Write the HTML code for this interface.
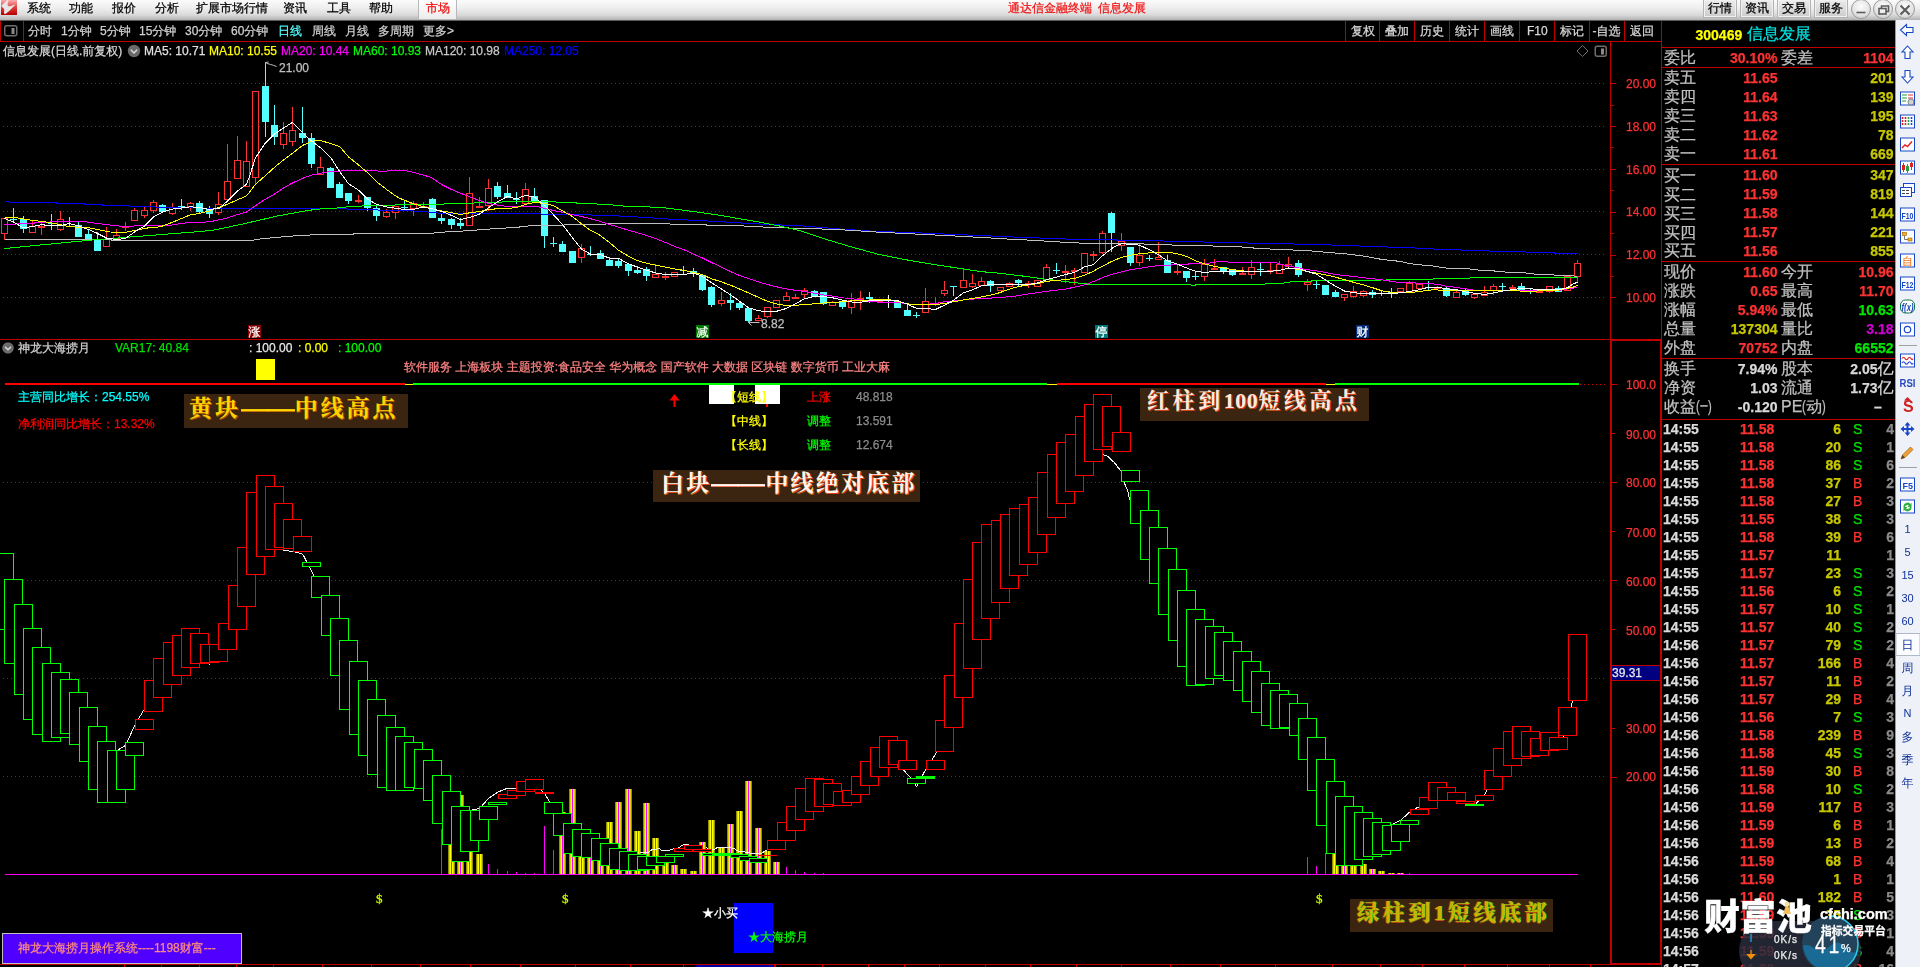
<!DOCTYPE html><html><head><meta charset="utf-8"><title>chart</title><style>
html,body{margin:0;padding:0;width:1920px;height:967px;overflow:hidden}
html{background:#000}
body{position:relative;will-change:opacity;background:transparent;font-family:"Liberation Sans","WenQuanYi Zen Hei",sans-serif;font-size:12px;color:#c8c8c8}
.t{position:absolute;white-space:nowrap;line-height:1;font-size:12px;-webkit-text-stroke:0.25px currentColor}
.b{position:absolute;box-sizing:border-box}
.n{font-weight:bold;font-size:14px;font-family:"Liberation Sans",sans-serif}
.l{font-size:16px;color:#c0c0c0}
.r{text-align:right}
.pp{display:inline-block;width:4px;transform:scaleX(0.7);transform-origin:left center}
svg{position:absolute;left:0;top:0}
.lab{position:absolute;background:#3c2510;font-family:"Liberation Serif","Noto Serif CJK SC",serif;font-weight:700;white-space:nowrap;line-height:1;box-sizing:border-box}
</style></head><body>
<div class="b" style="left:0px;top:0px;width:1920px;height:21px;background:linear-gradient(#fbfbfb 0%,#eeeeee 40%,#dadada 75%,#b2b2b2 100%);border-bottom:1px solid #5a5a5a"></div>
<svg width="18" height="16" style="left:0;top:0" viewBox="0 0 18 16" shape-rendering="geometricPrecision"><defs><linearGradient id="lg" x1="0" y1="0" x2="0" y2="1"><stop offset="0" stop-color="#f8b0b0"/><stop offset="0.5" stop-color="#e23a3a"/><stop offset="1" stop-color="#b40000"/></linearGradient></defs><rect x="1" y="0" width="16" height="15" fill="url(#lg)"/><path d="M1.5 5.500L7.500 0L8.600 0L7.400 4.800L9 6.600L15.600 4.400L9.500 10.800L5.500 14L4 13.600L4.200 9L1.500 6.500Z" fill="#e6e6e6"/></svg>
<span class="t " style="left:27px;top:2px;color:#000000;">系统</span>
<span class="t " style="left:69px;top:2px;color:#000000;">功能</span>
<span class="t " style="left:112px;top:2px;color:#000000;">报价</span>
<span class="t " style="left:155px;top:2px;color:#000000;">分析</span>
<span class="t " style="left:196px;top:2px;color:#000000;">扩展市场行情</span>
<span class="t " style="left:283px;top:2px;color:#000000;">资讯</span>
<span class="t " style="left:327px;top:2px;color:#000000;">工具</span>
<span class="t " style="left:369px;top:2px;color:#000000;">帮助</span>
<div class="b" style="left:418px;top:0px;width:39px;height:20px;background:linear-gradient(#ffffff,#ececec);border:1px solid #b8b8b8;border-top:none"></div>
<span class="t " style="left:426px;top:2px;color:#ee1010;">市场</span>
<span class="t " style="left:1008px;top:2px;color:#f01818;">通达信金融终端<span style="display:inline-block;width:6px"></span>信息发展</span>
<div class="b" style="left:1702.5px;top:-1px;width:34.5px;height:19px;background:linear-gradient(#ececec,#cccccc);border:1px solid #b4b4b4;box-shadow:inset 0 0 0 1px #f0f0f0"></div>
<span class="t " style="left:1708px;top:2px;color:#000000;">行情</span>
<div class="b" style="left:1739.5px;top:-1px;width:34.5px;height:19px;background:linear-gradient(#ececec,#cccccc);border:1px solid #b4b4b4;box-shadow:inset 0 0 0 1px #f0f0f0"></div>
<span class="t " style="left:1745px;top:2px;color:#000000;">资讯</span>
<div class="b" style="left:1776.5px;top:-1px;width:34.5px;height:19px;background:linear-gradient(#ececec,#cccccc);border:1px solid #b4b4b4;box-shadow:inset 0 0 0 1px #f0f0f0"></div>
<span class="t " style="left:1782px;top:2px;color:#000000;">交易</span>
<div class="b" style="left:1813.5px;top:-1px;width:34.5px;height:19px;background:linear-gradient(#ececec,#cccccc);border:1px solid #b4b4b4;box-shadow:inset 0 0 0 1px #f0f0f0"></div>
<span class="t " style="left:1819px;top:2px;color:#000000;">服务</span>
<div class="b" style="left:1851px;top:-1.5px;width:20px;height:20px;background:radial-gradient(circle at 50% 35%,#fdfdfd 0%,#e2e2e2 60%,#c0c0c0 100%);border:1px solid #9a9a9a;border-radius:50%"></div>
<div class="b" style="left:1873px;top:-1.5px;width:20px;height:20px;background:radial-gradient(circle at 50% 35%,#fdfdfd 0%,#e2e2e2 60%,#c0c0c0 100%);border:1px solid #9a9a9a;border-radius:50%"></div>
<div class="b" style="left:1895px;top:-1.5px;width:20px;height:20px;background:radial-gradient(circle at 50% 35%,#fdfdfd 0%,#e2e2e2 60%,#c0c0c0 100%);border:1px solid #9a9a9a;border-radius:50%"></div>
<svg width="70" height="21" style="left:1850px;top:0" viewBox="0 0 70 21" fill="none" stroke="#5a5a5a" stroke-width="1.6"><path d="M6.5 12.5h9"/><rect x="29" y="8.5" width="7" height="5.5"/><path d="M31.5 8.5v-2.5h7v5.5h-2.5"/><path d="M50.5 5.5l9 9M59.5 5.5l-9 9" stroke-width="2"/></svg>
<div class="b" style="left:0px;top:41px;width:1661px;height:1px;background:#c00000;"></div>
<div class="b" style="left:0px;top:21px;width:1px;height:21px;background:#c00000;"></div>
<div class="b" style="left:23px;top:21px;width:1px;height:20px;background:#c00000;"></div>
<svg width="14" height="12" style="left:4px;top:25px" viewBox="0 0 14 12"><rect x="0.75" y="0.75" width="12" height="10" rx="2" fill="none" stroke="#6e6e6e" stroke-width="1.5"/><rect x="7.5" y="3" width="3" height="6" fill="#8a8a8a"/></svg>
<span class="t " style="left:28px;top:25px;color:#d0d0d0;">分时</span>
<span class="t " style="left:61px;top:25px;color:#d0d0d0;">1分钟</span>
<span class="t " style="left:100px;top:25px;color:#d0d0d0;">5分钟</span>
<span class="t " style="left:139px;top:25px;color:#d0d0d0;">15分钟</span>
<span class="t " style="left:185px;top:25px;color:#d0d0d0;">30分钟</span>
<span class="t " style="left:231px;top:25px;color:#d0d0d0;">60分钟</span>
<span class="t " style="left:278px;top:25px;color:#54ffff;">日线</span>
<span class="t " style="left:312px;top:25px;color:#d0d0d0;">周线</span>
<span class="t " style="left:345px;top:25px;color:#d0d0d0;">月线</span>
<span class="t " style="left:378px;top:25px;color:#d0d0d0;">多周期</span>
<span class="t " style="left:423px;top:25px;color:#d0d0d0;">更多&gt;</span>
<div class="b" style="left:1345px;top:21px;width:1px;height:20px;background:#c00000;"></div>
<div class="b" style="left:1379px;top:21px;width:1px;height:20px;background:#c00000;"></div>
<div class="b" style="left:1414px;top:21px;width:1px;height:20px;background:#c00000;"></div>
<div class="b" style="left:1449px;top:21px;width:1px;height:20px;background:#c00000;"></div>
<div class="b" style="left:1484px;top:21px;width:1px;height:20px;background:#c00000;"></div>
<div class="b" style="left:1519px;top:21px;width:1px;height:20px;background:#c00000;"></div>
<div class="b" style="left:1554px;top:21px;width:1px;height:20px;background:#c00000;"></div>
<div class="b" style="left:1589px;top:21px;width:1px;height:20px;background:#c00000;"></div>
<div class="b" style="left:1624px;top:21px;width:1px;height:20px;background:#c00000;"></div>
<span class="t " style="left:1351px;top:25px;color:#d8d8d8;">复权</span>
<span class="t " style="left:1385px;top:25px;color:#d8d8d8;">叠加</span>
<span class="t " style="left:1420px;top:25px;color:#d8d8d8;">历史</span>
<span class="t " style="left:1455px;top:25px;color:#d8d8d8;">统计</span>
<span class="t " style="left:1490px;top:25px;color:#d8d8d8;">画线</span>
<span class="t " style="left:1527px;top:25px;color:#d8d8d8;">F10</span>
<span class="t " style="left:1560px;top:25px;color:#d8d8d8;">标记</span>
<span class="t " style="left:1592.5px;top:25px;color:#d8d8d8;">-自选</span>
<span class="t " style="left:1630px;top:25px;color:#d8d8d8;">返回</span>
<div class="b" style="left:1610px;top:42px;width:1px;height:298px;background:#c00000;"></div>
<div class="b" style="left:0px;top:339px;width:1661px;height:1px;background:#c00000;"></div>
<div class="b" style="left:1610px;top:340px;width:2px;height:624px;background:#c00000;"></div>
<div class="b" style="left:0px;top:964px;width:1612px;height:1px;background:#c00000;"></div>
<div class="b" style="left:1610px;top:963px;width:52px;height:2px;background:#c00000;"></div>
<div class="b" style="left:1660px;top:340px;width:1px;height:625px;background:#c00000;"></div>
<div class="b" style="left:1610px;top:340px;width:51px;height:1px;background:#c00000;"></div>
<div class="b" style="left:1661px;top:21px;width:1px;height:946px;background:#c00000;"></div>
<span class="t " style="left:3px;top:45px;color:#d8d8d8;">信息发展(日线.前复权)</span>
<svg width="14" height="14" style="left:127px;top:44px" viewBox="0 0 14 14"><circle cx="7" cy="7" r="6.2" fill="#6a6a6a"/><path d="M3.8 5.8L7 9l3.2-3.2" fill="none" stroke="#dcdcdc" stroke-width="1.5"/></svg>
<span class="t " style="left:144px;top:45px;color:#e0e0e0;">MA5: 10.71</span>
<span class="t " style="left:209px;top:45px;color:#ffff00;">MA10: 10.55</span>
<span class="t " style="left:281px;top:45px;color:#ff00ff;">MA20: 10.44</span>
<span class="t " style="left:353px;top:45px;color:#00ff00;">MA60: 10.93</span>
<span class="t " style="left:425px;top:45px;color:#c8c8c8;">MA120: 10.98</span>
<span class="t " style="left:504px;top:45px;color:#0000ff;">MA250: 12.05</span>
<svg width="32" height="14" style="left:1576px;top:44px" viewBox="0 0 32 14"><path d="M6.5 1.5l5.5 5.5-5.5 5.5L1 7z" fill="none" stroke="#6e6e6e" stroke-width="1"/><rect x="19.75" y="1.75" width="11" height="10" rx="2" fill="none" stroke="#6e6e6e" stroke-width="1.5" transform="translate(-0.5,0.5)"/><rect x="25" y="4.5" width="3" height="6" fill="#8a8a8a"/></svg>
<svg width="1661" height="967" viewBox="0 0 1661 967" shape-rendering="crispEdges">
<line x1="3" y1="83.5" x2="1604" y2="83.5" stroke="#d00000" stroke-width="1" stroke-dasharray="1 3"/>
<line x1="3" y1="126.5" x2="1604" y2="126.5" stroke="#d00000" stroke-width="1" stroke-dasharray="1 3"/>
<line x1="3" y1="169.5" x2="1604" y2="169.5" stroke="#d00000" stroke-width="1" stroke-dasharray="1 3"/>
<line x1="3" y1="211.5" x2="1604" y2="211.5" stroke="#d00000" stroke-width="1" stroke-dasharray="1 3"/>
<line x1="3" y1="254.5" x2="1604" y2="254.5" stroke="#d00000" stroke-width="1" stroke-dasharray="1 3"/>
<line x1="3" y1="297.5" x2="1604" y2="297.5" stroke="#d00000" stroke-width="1" stroke-dasharray="1 3"/>
<line x1="1611" y1="297.5" x2="1616" y2="297.5" stroke="#c00000" stroke-width="1"/>
<line x1="1611" y1="276.5" x2="1614" y2="276.5" stroke="#c00000" stroke-width="1"/>
<line x1="1611" y1="255.5" x2="1616" y2="255.5" stroke="#c00000" stroke-width="1"/>
<line x1="1611" y1="233.5" x2="1614" y2="233.5" stroke="#c00000" stroke-width="1"/>
<line x1="1611" y1="212.5" x2="1616" y2="212.5" stroke="#c00000" stroke-width="1"/>
<line x1="1611" y1="190.5" x2="1614" y2="190.5" stroke="#c00000" stroke-width="1"/>
<line x1="1611" y1="169.5" x2="1616" y2="169.5" stroke="#c00000" stroke-width="1"/>
<line x1="1611" y1="147.5" x2="1614" y2="147.5" stroke="#c00000" stroke-width="1"/>
<line x1="1611" y1="126.5" x2="1616" y2="126.5" stroke="#c00000" stroke-width="1"/>
<line x1="1611" y1="105.5" x2="1614" y2="105.5" stroke="#c00000" stroke-width="1"/>
<line x1="1611" y1="83.5" x2="1616" y2="83.5" stroke="#c00000" stroke-width="1"/>
<line x1="3" y1="482.5" x2="1606" y2="482.5" stroke="#d00000" stroke-width="1" stroke-dasharray="1 3"/>
<line x1="3" y1="580.5" x2="1606" y2="580.5" stroke="#d00000" stroke-width="1" stroke-dasharray="1 3"/>
<line x1="3" y1="678.5" x2="1606" y2="678.5" stroke="#d00000" stroke-width="1" stroke-dasharray="1 3"/>
<line x1="3" y1="776.5" x2="1606" y2="776.5" stroke="#d00000" stroke-width="1" stroke-dasharray="1 3"/>
<line x1="1580" y1="384.5" x2="1606" y2="384.5" stroke="#d00000" stroke-width="1" stroke-dasharray="1 3"/>
<line x1="1612" y1="777.5" x2="1617" y2="777.5" stroke="#c00000" stroke-width="1"/>
<line x1="1612" y1="728.5" x2="1615" y2="728.5" stroke="#c00000" stroke-width="1"/>
<line x1="1612" y1="678.5" x2="1617" y2="678.5" stroke="#c00000" stroke-width="1"/>
<line x1="1612" y1="629.5" x2="1615" y2="629.5" stroke="#c00000" stroke-width="1"/>
<line x1="1612" y1="580.5" x2="1617" y2="580.5" stroke="#c00000" stroke-width="1"/>
<line x1="1612" y1="531.5" x2="1615" y2="531.5" stroke="#c00000" stroke-width="1"/>
<line x1="1612" y1="482.5" x2="1617" y2="482.5" stroke="#c00000" stroke-width="1"/>
<line x1="1612" y1="433.5" x2="1615" y2="433.5" stroke="#c00000" stroke-width="1"/>
<line x1="1612" y1="384.5" x2="1617" y2="384.5" stroke="#c00000" stroke-width="1"/>
<line x1="124.5" y1="964" x2="124.5" y2="967" stroke="#c00000" stroke-width="1"/>
<line x1="161.5" y1="964" x2="161.5" y2="967" stroke="#c00000" stroke-width="1"/>
<line x1="199.5" y1="964" x2="199.5" y2="967" stroke="#c00000" stroke-width="1"/>
<line x1="236.5" y1="964" x2="236.5" y2="967" stroke="#c00000" stroke-width="1"/>
<line x1="273.5" y1="964" x2="273.5" y2="967" stroke="#c00000" stroke-width="1"/>
<line x1="322.5" y1="964" x2="322.5" y2="967" stroke="#c00000" stroke-width="1"/>
<line x1="371.5" y1="964" x2="371.5" y2="967" stroke="#c00000" stroke-width="1"/>
<line x1="420.5" y1="964" x2="420.5" y2="967" stroke="#c00000" stroke-width="1"/>
<line x1="470.5" y1="964" x2="470.5" y2="967" stroke="#c00000" stroke-width="1"/>
<line x1="520.5" y1="964" x2="520.5" y2="967" stroke="#c00000" stroke-width="1"/>
<line x1="575.5" y1="964" x2="575.5" y2="967" stroke="#c00000" stroke-width="1"/>
<line x1="630.5" y1="964" x2="630.5" y2="967" stroke="#c00000" stroke-width="1"/>
<line x1="683.5" y1="964" x2="683.5" y2="967" stroke="#c00000" stroke-width="1"/>
<line x1="774.5" y1="964" x2="774.5" y2="967" stroke="#c00000" stroke-width="1"/>
<line x1="775.5" y1="964" x2="775.5" y2="967" stroke="#c00000" stroke-width="1"/>
<line x1="822.5" y1="964" x2="822.5" y2="967" stroke="#c00000" stroke-width="1"/>
<line x1="868.5" y1="964" x2="868.5" y2="967" stroke="#c00000" stroke-width="1"/>
<line x1="904.5" y1="964" x2="904.5" y2="967" stroke="#c00000" stroke-width="1"/>
<line x1="939.5" y1="964" x2="939.5" y2="967" stroke="#c00000" stroke-width="1"/>
<line x1="985.5" y1="964" x2="985.5" y2="967" stroke="#c00000" stroke-width="1"/>
<line x1="1030.5" y1="964" x2="1030.5" y2="967" stroke="#c00000" stroke-width="1"/>
<line x1="1076.5" y1="964" x2="1076.5" y2="967" stroke="#c00000" stroke-width="1"/>
<line x1="1121.5" y1="964" x2="1121.5" y2="967" stroke="#c00000" stroke-width="1"/>
<line x1="1170.5" y1="964" x2="1170.5" y2="967" stroke="#c00000" stroke-width="1"/>
<line x1="1220.5" y1="964" x2="1220.5" y2="967" stroke="#c00000" stroke-width="1"/>
<line x1="1275.5" y1="964" x2="1275.5" y2="967" stroke="#c00000" stroke-width="1"/>
<line x1="1332.5" y1="964" x2="1332.5" y2="967" stroke="#c00000" stroke-width="1"/>
<line x1="1380.5" y1="964" x2="1380.5" y2="967" stroke="#c00000" stroke-width="1"/>
<line x1="1422.5" y1="964" x2="1422.5" y2="967" stroke="#c00000" stroke-width="1"/>
<line x1="1464.5" y1="964" x2="1464.5" y2="967" stroke="#c00000" stroke-width="1"/>
<line x1="1507.5" y1="964" x2="1507.5" y2="967" stroke="#c00000" stroke-width="1"/>
<line x1="1549.5" y1="964" x2="1549.5" y2="967" stroke="#c00000" stroke-width="1"/>
<line x1="1590.5" y1="964" x2="1590.5" y2="967" stroke="#c00000" stroke-width="1"/>
<rect x="696" y="965" width="77" height="2" fill="#0000a0"/>
<rect x="4" y="218" width="1" height="22" fill="#ff3232"/>
<rect x="1.5" y="218.5" width="6" height="15" fill="#000" stroke="#ff3232" stroke-width="1"/>
<rect x="13" y="208" width="1" height="13" fill="#54ffff"/>
<rect x="10" y="219" width="7" height="1" fill="#54ffff"/>
<rect x="23" y="216" width="1" height="17" fill="#54ffff"/>
<rect x="20" y="219" width="7" height="10" fill="#54ffff"/>
<rect x="32" y="221" width="1" height="12" fill="#ff3232"/>
<rect x="29.5" y="226.5" width="6" height="6" fill="#000" stroke="#ff3232" stroke-width="1"/>
<rect x="41" y="221" width="1" height="14" fill="#ff3232"/>
<rect x="38" y="226" width="7" height="2" fill="#ff3232"/>
<rect x="51" y="214" width="1" height="16" fill="#54ffff"/>
<rect x="48" y="223" width="7" height="1" fill="#54ffff"/>
<rect x="60" y="211" width="1" height="20" fill="#ff3232"/>
<rect x="57.5" y="219.5" width="6" height="10" fill="#000" stroke="#ff3232" stroke-width="1"/>
<rect x="69" y="217" width="1" height="9" fill="#54ffff"/>
<rect x="66" y="221" width="7" height="1" fill="#54ffff"/>
<rect x="78" y="221" width="1" height="16" fill="#54ffff"/>
<rect x="75" y="225" width="7" height="12" fill="#54ffff"/>
<rect x="88" y="229" width="1" height="11" fill="#54ffff"/>
<rect x="85" y="234" width="7" height="6" fill="#54ffff"/>
<rect x="97" y="232" width="1" height="19" fill="#54ffff"/>
<rect x="94" y="239" width="7" height="12" fill="#54ffff"/>
<rect x="106" y="227" width="1" height="20" fill="#ff3232"/>
<rect x="103.5" y="239.5" width="6" height="7" fill="#000" stroke="#ff3232" stroke-width="1"/>
<rect x="116" y="229" width="1" height="11" fill="#ff3232"/>
<rect x="113.5" y="235.5" width="6" height="3" fill="#000" stroke="#ff3232" stroke-width="1"/>
<rect x="125" y="222" width="1" height="9" fill="#ff3232"/>
<rect x="122" y="226" width="7" height="2" fill="#ff3232"/>
<rect x="134" y="208" width="1" height="13" fill="#ff3232"/>
<rect x="131.5" y="210.5" width="6" height="10" fill="#000" stroke="#ff3232" stroke-width="1"/>
<rect x="144" y="207" width="1" height="11" fill="#ff3232"/>
<rect x="141.5" y="210.5" width="6" height="5" fill="#000" stroke="#ff3232" stroke-width="1"/>
<rect x="153" y="200" width="1" height="13" fill="#ff3232"/>
<rect x="150.5" y="202.5" width="6" height="8" fill="#000" stroke="#ff3232" stroke-width="1"/>
<rect x="162" y="204" width="1" height="8" fill="#54ffff"/>
<rect x="159" y="205" width="7" height="7" fill="#54ffff"/>
<rect x="172" y="203" width="1" height="12" fill="#ff3232"/>
<rect x="169.5" y="207.5" width="6" height="6" fill="#000" stroke="#ff3232" stroke-width="1"/>
<rect x="181" y="199" width="1" height="11" fill="#54ffff"/>
<rect x="178" y="206" width="7" height="1" fill="#54ffff"/>
<rect x="190" y="202" width="1" height="9" fill="#ff3232"/>
<rect x="187.5" y="203.5" width="6" height="3" fill="#000" stroke="#ff3232" stroke-width="1"/>
<rect x="199" y="201" width="1" height="12" fill="#54ffff"/>
<rect x="196" y="203" width="7" height="9" fill="#54ffff"/>
<rect x="209" y="206" width="1" height="12" fill="#54ffff"/>
<rect x="206" y="208" width="7" height="6" fill="#54ffff"/>
<rect x="218" y="192" width="1" height="23" fill="#ff3232"/>
<rect x="215.5" y="204.5" width="6" height="8" fill="#000" stroke="#ff3232" stroke-width="1"/>
<rect x="227" y="144" width="1" height="56" fill="#ff3232"/>
<rect x="224.5" y="181.5" width="6" height="18" fill="#000" stroke="#ff3232" stroke-width="1"/>
<rect x="237" y="136" width="1" height="43" fill="#ff3232"/>
<rect x="234.5" y="160.5" width="6" height="18" fill="#000" stroke="#ff3232" stroke-width="1"/>
<rect x="246" y="141" width="1" height="46" fill="#ff3232"/>
<rect x="243.5" y="161.5" width="6" height="25" fill="#000" stroke="#ff3232" stroke-width="1"/>
<rect x="255" y="91" width="1" height="93" fill="#ff3232"/>
<rect x="252.5" y="91.5" width="6" height="86" fill="#000" stroke="#ff3232" stroke-width="1"/>
<rect x="265" y="64" width="1" height="73" fill="#54ffff"/>
<rect x="262" y="86" width="7" height="36" fill="#54ffff"/>
<rect x="274" y="105" width="1" height="40" fill="#54ffff"/>
<rect x="271" y="125" width="7" height="12" fill="#54ffff"/>
<rect x="283" y="122" width="1" height="27" fill="#ff3232"/>
<rect x="280.5" y="133.5" width="6" height="11" fill="#000" stroke="#ff3232" stroke-width="1"/>
<rect x="292" y="107" width="1" height="39" fill="#ff3232"/>
<rect x="289.5" y="130.5" width="6" height="11" fill="#000" stroke="#ff3232" stroke-width="1"/>
<rect x="302" y="107" width="1" height="36" fill="#54ffff"/>
<rect x="299" y="133" width="7" height="5" fill="#54ffff"/>
<rect x="311" y="133" width="1" height="35" fill="#54ffff"/>
<rect x="308" y="138" width="7" height="26" fill="#54ffff"/>
<rect x="320" y="157" width="1" height="18" fill="#ff3232"/>
<rect x="317.5" y="167.5" width="6" height="7" fill="#000" stroke="#ff3232" stroke-width="1"/>
<rect x="330" y="167" width="1" height="21" fill="#54ffff"/>
<rect x="327" y="168" width="7" height="20" fill="#54ffff"/>
<rect x="339" y="182" width="1" height="16" fill="#54ffff"/>
<rect x="336" y="184" width="7" height="14" fill="#54ffff"/>
<rect x="348" y="193" width="1" height="11" fill="#54ffff"/>
<rect x="345" y="193" width="7" height="8" fill="#54ffff"/>
<rect x="358" y="195" width="1" height="8" fill="#ff3232"/>
<rect x="355" y="200" width="7" height="2" fill="#ff3232"/>
<rect x="367" y="197" width="1" height="14" fill="#54ffff"/>
<rect x="364" y="197" width="7" height="11" fill="#54ffff"/>
<rect x="376" y="206" width="1" height="15" fill="#54ffff"/>
<rect x="373" y="208" width="7" height="8" fill="#54ffff"/>
<rect x="386" y="209" width="1" height="9" fill="#ff3232"/>
<rect x="383.5" y="212.5" width="6" height="4" fill="#000" stroke="#ff3232" stroke-width="1"/>
<rect x="395" y="206" width="1" height="13" fill="#ff3232"/>
<rect x="392.5" y="206.5" width="6" height="6" fill="#000" stroke="#ff3232" stroke-width="1"/>
<rect x="404" y="201" width="1" height="9" fill="#54ffff"/>
<rect x="401" y="207" width="7" height="1" fill="#54ffff"/>
<rect x="413" y="201" width="1" height="15" fill="#ff3232"/>
<rect x="410.5" y="203.5" width="6" height="5" fill="#000" stroke="#ff3232" stroke-width="1"/>
<rect x="423" y="202" width="1" height="6" fill="#ff3232"/>
<rect x="420" y="206" width="7" height="2" fill="#ff3232"/>
<rect x="432" y="198" width="1" height="20" fill="#54ffff"/>
<rect x="429" y="199" width="7" height="19" fill="#54ffff"/>
<rect x="441" y="214" width="1" height="10" fill="#54ffff"/>
<rect x="438" y="218" width="7" height="3" fill="#54ffff"/>
<rect x="451" y="218" width="1" height="11" fill="#54ffff"/>
<rect x="448" y="219" width="7" height="6" fill="#54ffff"/>
<rect x="460" y="218" width="1" height="11" fill="#54ffff"/>
<rect x="457" y="223" width="7" height="3" fill="#54ffff"/>
<rect x="469" y="177" width="1" height="49" fill="#ff3232"/>
<rect x="466.5" y="193.5" width="6" height="32" fill="#000" stroke="#ff3232" stroke-width="1"/>
<rect x="479" y="197" width="1" height="11" fill="#ff3232"/>
<rect x="476" y="206" width="7" height="2" fill="#ff3232"/>
<rect x="488" y="179" width="1" height="32" fill="#ff3232"/>
<rect x="485.5" y="188.5" width="6" height="17" fill="#000" stroke="#ff3232" stroke-width="1"/>
<rect x="497" y="182" width="1" height="17" fill="#54ffff"/>
<rect x="494" y="186" width="7" height="11" fill="#54ffff"/>
<rect x="507" y="185" width="1" height="13" fill="#54ffff"/>
<rect x="504" y="193" width="7" height="5" fill="#54ffff"/>
<rect x="516" y="192" width="1" height="12" fill="#54ffff"/>
<rect x="513" y="199" width="7" height="1" fill="#54ffff"/>
<rect x="525" y="183" width="1" height="21" fill="#ff3232"/>
<rect x="522.5" y="189.5" width="6" height="14" fill="#000" stroke="#ff3232" stroke-width="1"/>
<rect x="534" y="188" width="1" height="14" fill="#54ffff"/>
<rect x="531" y="196" width="7" height="6" fill="#54ffff"/>
<rect x="544" y="200" width="1" height="48" fill="#54ffff"/>
<rect x="541" y="200" width="7" height="36" fill="#54ffff"/>
<rect x="553" y="237" width="1" height="10" fill="#54ffff"/>
<rect x="550" y="243" width="7" height="1" fill="#54ffff"/>
<rect x="562" y="241" width="1" height="11" fill="#54ffff"/>
<rect x="559" y="244" width="7" height="8" fill="#54ffff"/>
<rect x="572" y="251" width="1" height="12" fill="#54ffff"/>
<rect x="569" y="251" width="7" height="12" fill="#54ffff"/>
<rect x="581" y="244" width="1" height="19" fill="#ff3232"/>
<rect x="578.5" y="248.5" width="6" height="9" fill="#000" stroke="#ff3232" stroke-width="1"/>
<rect x="590" y="246" width="1" height="10" fill="#54ffff"/>
<rect x="587" y="254" width="7" height="1" fill="#54ffff"/>
<rect x="600" y="250" width="1" height="9" fill="#54ffff"/>
<rect x="597" y="253" width="7" height="6" fill="#54ffff"/>
<rect x="609" y="257" width="1" height="9" fill="#54ffff"/>
<rect x="606" y="260" width="7" height="6" fill="#54ffff"/>
<rect x="618" y="258" width="1" height="10" fill="#54ffff"/>
<rect x="615" y="261" width="7" height="5" fill="#54ffff"/>
<rect x="628" y="264" width="1" height="12" fill="#54ffff"/>
<rect x="625" y="264" width="7" height="7" fill="#54ffff"/>
<rect x="637" y="266" width="1" height="8" fill="#54ffff"/>
<rect x="634" y="270" width="7" height="3" fill="#54ffff"/>
<rect x="646" y="267" width="1" height="14" fill="#54ffff"/>
<rect x="643" y="269" width="7" height="7" fill="#54ffff"/>
<rect x="655" y="264" width="1" height="14" fill="#ff3232"/>
<rect x="652.5" y="274.5" width="6" height="3" fill="#000" stroke="#ff3232" stroke-width="1"/>
<rect x="665" y="272" width="1" height="8" fill="#ff3232"/>
<rect x="662" y="276" width="7" height="2" fill="#ff3232"/>
<rect x="674" y="272" width="1" height="5" fill="#ff3232"/>
<rect x="671.5" y="272.5" width="6" height="4" fill="#000" stroke="#ff3232" stroke-width="1"/>
<rect x="683" y="266" width="1" height="9" fill="#54ffff"/>
<rect x="680" y="270" width="7" height="1" fill="#54ffff"/>
<rect x="693" y="268" width="1" height="9" fill="#54ffff"/>
<rect x="690" y="271" width="7" height="3" fill="#54ffff"/>
<rect x="702" y="274" width="1" height="17" fill="#54ffff"/>
<rect x="699" y="275" width="7" height="15" fill="#54ffff"/>
<rect x="711" y="286" width="1" height="21" fill="#54ffff"/>
<rect x="708" y="287" width="7" height="18" fill="#54ffff"/>
<rect x="721" y="292" width="1" height="14" fill="#ff3232"/>
<rect x="718.5" y="300.5" width="6" height="3" fill="#000" stroke="#ff3232" stroke-width="1"/>
<rect x="730" y="293" width="1" height="17" fill="#54ffff"/>
<rect x="727" y="300" width="7" height="3" fill="#54ffff"/>
<rect x="739" y="302" width="1" height="8" fill="#54ffff"/>
<rect x="736" y="303" width="7" height="5" fill="#54ffff"/>
<rect x="748" y="308" width="1" height="14" fill="#54ffff"/>
<rect x="745" y="308" width="7" height="13" fill="#54ffff"/>
<rect x="758" y="315" width="1" height="6" fill="#ff3232"/>
<rect x="755.5" y="318.5" width="6" height="2" fill="#000" stroke="#ff3232" stroke-width="1"/>
<rect x="767" y="307" width="1" height="11" fill="#ff3232"/>
<rect x="764.5" y="307.5" width="6" height="9" fill="#000" stroke="#ff3232" stroke-width="1"/>
<rect x="776" y="300" width="1" height="8" fill="#ff3232"/>
<rect x="773.5" y="300.5" width="6" height="7" fill="#000" stroke="#ff3232" stroke-width="1"/>
<rect x="786" y="292" width="1" height="9" fill="#ff3232"/>
<rect x="783.5" y="296.5" width="6" height="4" fill="#000" stroke="#ff3232" stroke-width="1"/>
<rect x="795" y="294" width="1" height="5" fill="#ff3232"/>
<rect x="792" y="297" width="7" height="2" fill="#ff3232"/>
<rect x="804" y="288" width="1" height="11" fill="#ff3232"/>
<rect x="801.5" y="290.5" width="6" height="4" fill="#000" stroke="#ff3232" stroke-width="1"/>
<rect x="814" y="290" width="1" height="7" fill="#54ffff"/>
<rect x="811" y="291" width="7" height="6" fill="#54ffff"/>
<rect x="823" y="292" width="1" height="13" fill="#54ffff"/>
<rect x="820" y="292" width="7" height="12" fill="#54ffff"/>
<rect x="832" y="301" width="1" height="5" fill="#ff3232"/>
<rect x="829.5" y="302.5" width="6" height="3" fill="#000" stroke="#ff3232" stroke-width="1"/>
<rect x="842" y="302" width="1" height="7" fill="#54ffff"/>
<rect x="839" y="302" width="7" height="5" fill="#54ffff"/>
<rect x="851" y="293" width="1" height="21" fill="#ff3232"/>
<rect x="848.5" y="300.5" width="6" height="7" fill="#000" stroke="#ff3232" stroke-width="1"/>
<rect x="860" y="291" width="1" height="19" fill="#ff3232"/>
<rect x="857" y="298" width="7" height="2" fill="#ff3232"/>
<rect x="869" y="292" width="1" height="11" fill="#54ffff"/>
<rect x="866" y="297" width="7" height="2" fill="#54ffff"/>
<rect x="879" y="300" width="1" height="2" fill="#ff3232"/>
<rect x="876.5" y="300.5" width="6" height="1" fill="#000" stroke="#ff3232" stroke-width="1"/>
<rect x="888" y="295" width="1" height="13" fill="#ffffff"/>
<rect x="885" y="300" width="7" height="1" fill="#ffffff"/>
<rect x="897" y="301" width="1" height="7" fill="#54ffff"/>
<rect x="894" y="301" width="7" height="7" fill="#54ffff"/>
<rect x="907" y="303" width="1" height="13" fill="#54ffff"/>
<rect x="904" y="310" width="7" height="6" fill="#54ffff"/>
<rect x="916" y="312" width="1" height="6" fill="#54ffff"/>
<rect x="913" y="315" width="7" height="1" fill="#54ffff"/>
<rect x="925" y="288" width="1" height="25" fill="#ff3232"/>
<rect x="922.5" y="301.5" width="6" height="11" fill="#000" stroke="#ff3232" stroke-width="1"/>
<rect x="935" y="297" width="1" height="9" fill="#ff3232"/>
<rect x="932" y="303" width="7" height="2" fill="#ff3232"/>
<rect x="944" y="281" width="1" height="15" fill="#ff3232"/>
<rect x="941.5" y="290.5" width="6" height="3" fill="#000" stroke="#ff3232" stroke-width="1"/>
<rect x="953" y="286" width="1" height="10" fill="#54ffff"/>
<rect x="950" y="286" width="7" height="1" fill="#54ffff"/>
<rect x="963" y="269" width="1" height="19" fill="#ff3232"/>
<rect x="960.5" y="280.5" width="6" height="7" fill="#000" stroke="#ff3232" stroke-width="1"/>
<rect x="972" y="274" width="1" height="14" fill="#ff3232"/>
<rect x="969.5" y="283.5" width="6" height="3" fill="#000" stroke="#ff3232" stroke-width="1"/>
<rect x="981" y="277" width="1" height="9" fill="#ff3232"/>
<rect x="978.5" y="281.5" width="6" height="4" fill="#000" stroke="#ff3232" stroke-width="1"/>
<rect x="990" y="280" width="1" height="12" fill="#54ffff"/>
<rect x="987" y="281" width="7" height="5" fill="#54ffff"/>
<rect x="1000" y="287" width="1" height="4" fill="#ff3232"/>
<rect x="997.5" y="287.5" width="6" height="3" fill="#000" stroke="#ff3232" stroke-width="1"/>
<rect x="1009" y="282" width="1" height="5" fill="#ff3232"/>
<rect x="1006.5" y="283.5" width="6" height="3" fill="#000" stroke="#ff3232" stroke-width="1"/>
<rect x="1018" y="279" width="1" height="8" fill="#54ffff"/>
<rect x="1015" y="280" width="7" height="3" fill="#54ffff"/>
<rect x="1028" y="281" width="1" height="7" fill="#ff3232"/>
<rect x="1025" y="283" width="7" height="2" fill="#ff3232"/>
<rect x="1037" y="280" width="1" height="7" fill="#ff3232"/>
<rect x="1034.5" y="280.5" width="6" height="6" fill="#000" stroke="#ff3232" stroke-width="1"/>
<rect x="1046" y="264" width="1" height="18" fill="#ff3232"/>
<rect x="1043.5" y="267.5" width="6" height="14" fill="#000" stroke="#ff3232" stroke-width="1"/>
<rect x="1056" y="263" width="1" height="11" fill="#54ffff"/>
<rect x="1053" y="270" width="7" height="1" fill="#54ffff"/>
<rect x="1065" y="265" width="1" height="18" fill="#ff3232"/>
<rect x="1062" y="271" width="7" height="2" fill="#ff3232"/>
<rect x="1074" y="268" width="1" height="17" fill="#ff3232"/>
<rect x="1071" y="270" width="7" height="2" fill="#ff3232"/>
<rect x="1084" y="253" width="1" height="20" fill="#ff3232"/>
<rect x="1081.5" y="253.5" width="6" height="19" fill="#000" stroke="#ff3232" stroke-width="1"/>
<rect x="1093" y="251" width="1" height="10" fill="#ff3232"/>
<rect x="1090" y="254" width="7" height="2" fill="#ff3232"/>
<rect x="1102" y="231" width="1" height="23" fill="#ff3232"/>
<rect x="1099.5" y="233.5" width="6" height="19" fill="#000" stroke="#ff3232" stroke-width="1"/>
<rect x="1111" y="212" width="1" height="40" fill="#54ffff"/>
<rect x="1108" y="213" width="7" height="20" fill="#54ffff"/>
<rect x="1121" y="233" width="1" height="18" fill="#ff3232"/>
<rect x="1118.5" y="241.5" width="6" height="4" fill="#000" stroke="#ff3232" stroke-width="1"/>
<rect x="1130" y="247" width="1" height="19" fill="#54ffff"/>
<rect x="1127" y="247" width="7" height="16" fill="#54ffff"/>
<rect x="1139" y="244" width="1" height="22" fill="#ff3232"/>
<rect x="1136.5" y="255.5" width="6" height="7" fill="#000" stroke="#ff3232" stroke-width="1"/>
<rect x="1149" y="255" width="1" height="6" fill="#54ffff"/>
<rect x="1146" y="258" width="7" height="1" fill="#54ffff"/>
<rect x="1158" y="242" width="1" height="18" fill="#ff3232"/>
<rect x="1155.5" y="257.5" width="6" height="2" fill="#000" stroke="#ff3232" stroke-width="1"/>
<rect x="1167" y="255" width="1" height="18" fill="#54ffff"/>
<rect x="1164" y="260" width="7" height="13" fill="#54ffff"/>
<rect x="1177" y="265" width="1" height="10" fill="#ff3232"/>
<rect x="1174" y="271" width="7" height="2" fill="#ff3232"/>
<rect x="1186" y="271" width="1" height="11" fill="#54ffff"/>
<rect x="1183" y="271" width="7" height="7" fill="#54ffff"/>
<rect x="1195" y="271" width="1" height="9" fill="#54ffff"/>
<rect x="1192" y="276" width="7" height="1" fill="#54ffff"/>
<rect x="1204" y="259" width="1" height="22" fill="#ff3232"/>
<rect x="1201.5" y="264.5" width="6" height="12" fill="#000" stroke="#ff3232" stroke-width="1"/>
<rect x="1214" y="259" width="1" height="10" fill="#ff3232"/>
<rect x="1211" y="268" width="7" height="2" fill="#ff3232"/>
<rect x="1223" y="267" width="1" height="7" fill="#54ffff"/>
<rect x="1220" y="267" width="7" height="4" fill="#54ffff"/>
<rect x="1232" y="269" width="1" height="7" fill="#54ffff"/>
<rect x="1229" y="270" width="7" height="5" fill="#54ffff"/>
<rect x="1242" y="267" width="1" height="8" fill="#ff3232"/>
<rect x="1239" y="273" width="7" height="2" fill="#ff3232"/>
<rect x="1251" y="260" width="1" height="19" fill="#ff3232"/>
<rect x="1248.5" y="267.5" width="6" height="7" fill="#000" stroke="#ff3232" stroke-width="1"/>
<rect x="1260" y="263" width="1" height="13" fill="#54ffff"/>
<rect x="1257" y="269" width="7" height="1" fill="#54ffff"/>
<rect x="1270" y="262" width="1" height="12" fill="#ff3232"/>
<rect x="1267" y="270" width="7" height="2" fill="#ff3232"/>
<rect x="1279" y="261" width="1" height="13" fill="#ff3232"/>
<rect x="1276.5" y="264.5" width="6" height="9" fill="#000" stroke="#ff3232" stroke-width="1"/>
<rect x="1288" y="257" width="1" height="10" fill="#ff3232"/>
<rect x="1285.5" y="264.5" width="6" height="2" fill="#000" stroke="#ff3232" stroke-width="1"/>
<rect x="1298" y="260" width="1" height="17" fill="#54ffff"/>
<rect x="1295" y="263" width="7" height="12" fill="#54ffff"/>
<rect x="1307" y="279" width="1" height="12" fill="#ff3232"/>
<rect x="1304.5" y="282.5" width="6" height="2" fill="#000" stroke="#ff3232" stroke-width="1"/>
<rect x="1316" y="281" width="1" height="8" fill="#54ffff"/>
<rect x="1313" y="284" width="7" height="1" fill="#54ffff"/>
<rect x="1325" y="285" width="1" height="10" fill="#54ffff"/>
<rect x="1322" y="285" width="7" height="10" fill="#54ffff"/>
<rect x="1335" y="290" width="1" height="7" fill="#54ffff"/>
<rect x="1332" y="292" width="7" height="5" fill="#54ffff"/>
<rect x="1344" y="294" width="1" height="7" fill="#ff3232"/>
<rect x="1341.5" y="294.5" width="6" height="3" fill="#000" stroke="#ff3232" stroke-width="1"/>
<rect x="1353" y="286" width="1" height="12" fill="#ff3232"/>
<rect x="1350.5" y="291.5" width="6" height="5" fill="#000" stroke="#ff3232" stroke-width="1"/>
<rect x="1363" y="290" width="1" height="7" fill="#ff3232"/>
<rect x="1360.5" y="291.5" width="6" height="4" fill="#000" stroke="#ff3232" stroke-width="1"/>
<rect x="1372" y="290" width="1" height="8" fill="#54ffff"/>
<rect x="1369" y="292" width="7" height="3" fill="#54ffff"/>
<rect x="1381" y="290" width="1" height="6" fill="#54ffff"/>
<rect x="1378" y="293" width="7" height="1" fill="#54ffff"/>
<rect x="1391" y="288" width="1" height="10" fill="#54ffff"/>
<rect x="1388" y="292" width="7" height="1" fill="#54ffff"/>
<rect x="1400" y="288" width="1" height="4" fill="#ff3232"/>
<rect x="1397.5" y="288.5" width="6" height="3" fill="#000" stroke="#ff3232" stroke-width="1"/>
<rect x="1409" y="281" width="1" height="11" fill="#ff3232"/>
<rect x="1406.5" y="283.5" width="6" height="8" fill="#000" stroke="#ff3232" stroke-width="1"/>
<rect x="1419" y="284" width="1" height="5" fill="#ff3232"/>
<rect x="1416.5" y="284.5" width="6" height="4" fill="#000" stroke="#ff3232" stroke-width="1"/>
<rect x="1428" y="281" width="1" height="9" fill="#54ffff"/>
<rect x="1425" y="287" width="7" height="1" fill="#54ffff"/>
<rect x="1437" y="286" width="1" height="4" fill="#ff3232"/>
<rect x="1434" y="287" width="7" height="2" fill="#ff3232"/>
<rect x="1446" y="287" width="1" height="10" fill="#54ffff"/>
<rect x="1443" y="288" width="7" height="8" fill="#54ffff"/>
<rect x="1456" y="291" width="1" height="7" fill="#ff3232"/>
<rect x="1453.5" y="292.5" width="6" height="5" fill="#000" stroke="#ff3232" stroke-width="1"/>
<rect x="1465" y="289" width="1" height="7" fill="#54ffff"/>
<rect x="1462" y="291" width="7" height="4" fill="#54ffff"/>
<rect x="1474" y="294" width="1" height="5" fill="#ff3232"/>
<rect x="1471.5" y="294.5" width="6" height="3" fill="#000" stroke="#ff3232" stroke-width="1"/>
<rect x="1484" y="286" width="1" height="10" fill="#ff3232"/>
<rect x="1481.5" y="292.5" width="6" height="3" fill="#000" stroke="#ff3232" stroke-width="1"/>
<rect x="1493" y="284" width="1" height="11" fill="#ff3232"/>
<rect x="1490.5" y="286.5" width="6" height="4" fill="#000" stroke="#ff3232" stroke-width="1"/>
<rect x="1502" y="283" width="1" height="7" fill="#54ffff"/>
<rect x="1499" y="286" width="7" height="1" fill="#54ffff"/>
<rect x="1512" y="285" width="1" height="4" fill="#ff3232"/>
<rect x="1509" y="287" width="7" height="2" fill="#ff3232"/>
<rect x="1521" y="283" width="1" height="7" fill="#54ffff"/>
<rect x="1518" y="286" width="7" height="4" fill="#54ffff"/>
<rect x="1530" y="289" width="1" height="5" fill="#54ffff"/>
<rect x="1527" y="291" width="7" height="1" fill="#54ffff"/>
<rect x="1539" y="291" width="1" height="2" fill="#ff3232"/>
<rect x="1536.5" y="291.5" width="6" height="1" fill="#000" stroke="#ff3232" stroke-width="1"/>
<rect x="1549" y="286" width="1" height="7" fill="#ff3232"/>
<rect x="1546.5" y="286.5" width="6" height="5" fill="#000" stroke="#ff3232" stroke-width="1"/>
<rect x="1558" y="286" width="1" height="6" fill="#54ffff"/>
<rect x="1555" y="288" width="7" height="4" fill="#54ffff"/>
<rect x="1567" y="276" width="1" height="15" fill="#ff3232"/>
<rect x="1564.5" y="276.5" width="6" height="14" fill="#000" stroke="#ff3232" stroke-width="1"/>
<rect x="1577" y="260" width="1" height="23" fill="#ff3232"/>
<rect x="1574.5" y="263.5" width="6" height="13" fill="#000" stroke="#ff3232" stroke-width="1"/>
<polyline points="4.5,201.3 9.0,201.3 10.0,202.3 55.0,202.3 57.0,203.3 83.0,203.3 85.0,204.3 101.0,204.3 103.0,205.3 128.0,205.3 130.0,206.5 155.0,206.5 157.0,207.5 200.0,208.0 334.5,208.6 368.0,209.7 400.0,210.7 427.0,211.3 429.7,212.8 458.0,213.5 539.6,213.5 542.0,214.5 600.0,215.1 632.3,216.6 651.7,217.9 671.1,219.2 698.3,220.5 716.4,221.5 742.2,223.1 761.6,224.1 781.0,225.0 800.0,225.8 838.8,228.9 877.6,231.5 916.4,232.8 955.1,234.5 1000.0,236.4 1012.9,237.0 1041.4,238.1 1069.8,239.2 1116.4,239.9 1117.6,240.5 1161.6,240.5 1163.5,241.3 1200.0,241.6 1209.7,242.5 1246.5,242.8 1247.8,243.5 1293.0,243.5 1294.4,244.4 1330.6,244.7 1331.9,245.5 1358.4,245.7 1359.7,246.6 1386.2,246.6 1387.5,247.4 1414.9,247.7 1416.2,248.6 1432.3,248.7 1433.6,249.6 1460.8,249.6 1462.0,250.5 1488.6,250.5 1489.9,251.5 1525.4,251.5 1526.7,252.4 1553.8,252.6 1555.1,253.5 1577.5,253.5" fill="none" stroke="#0000ff" stroke-width="1"/>
<polyline points="4.5,239.2 110.0,239.2 112.0,240.2 200.0,240.4 250.4,240.5 260.8,238.9 277.6,237.3 297.0,235.7 316.4,234.7 352.5,234.4 355.0,233.4 400.0,233.5 427.8,233.5 445.2,232.0 464.6,230.9 490.5,229.0 516.4,227.4 529.3,225.8 561.6,225.4 566.8,224.5 600.0,224.5 613.0,223.5 669.8,223.7 671.0,224.6 706.0,224.8 707.3,225.4 743.5,225.7 744.8,226.6 762.9,226.7 764.2,227.6 800.0,228.2 838.8,229.6 877.6,232.1 916.4,234.1 955.1,236.0 1000.0,238.5 1014.2,239.6 1032.3,240.2 1051.7,241.5 1069.8,242.6 1089.2,243.5 1143.5,243.7 1144.8,244.5 1172.0,244.8 1173.2,245.7 1200.0,245.7 1237.5,246.6 1256.9,248.3 1275.0,249.3 1293.0,250.0 1311.2,250.9 1329.3,252.6 1346.1,253.9 1366.8,256.5 1381.0,259.3 1400.0,261.4 1407.8,263.2 1415.5,264.5 1432.3,265.8 1442.7,267.7 1451.7,268.6 1469.8,269.0 1480.2,270.3 1498.3,271.2 1508.6,272.5 1525.4,272.9 1535.7,274.2 1553.8,274.8 1555.1,275.7 1573.2,275.8 1577.5,276.5" fill="none" stroke="#c0c0c0" stroke-width="1"/>
<polyline points="4.5,248.5 90.0,240.2 200.0,231.5 213.0,230.2 225.9,227.6 241.4,224.3 258.2,220.5 277.6,215.9 297.0,212.4 316.4,209.2 335.7,208.2 353.8,206.2 381.0,205.6 400.0,204.8 472.4,203.5 475.0,202.5 500.8,202.2 503.4,201.6 555.1,201.6 557.7,202.5 575.8,202.8 578.4,203.5 595.2,203.8 600.0,204.3 613.0,205.0 625.9,206.3 660.8,207.3 687.9,210.8 716.4,214.7 742.2,219.2 761.6,222.5 781.0,226.3 800.0,230.7 825.9,239.3 851.7,247.0 877.6,254.1 903.4,259.3 929.3,263.8 955.1,267.7 981.0,271.6 1000.0,273.3 1012.9,274.9 1025.9,276.4 1042.7,278.8 1060.8,281.0 1080.2,283.3 1089.2,284.2 1190.0,284.2 1191.3,285.2 1200.0,284.8 1264.6,284.5 1266.0,283.2 1282.7,283.2 1293.0,281.5 1311.2,281.3 1312.5,280.2 1386.2,280.0 1387.5,279.3 1400.0,279.5 1432.3,279.7 1433.6,278.4 1469.8,278.4 1471.1,277.4 1577.5,277.4" fill="none" stroke="#00ff00" stroke-width="1"/>
<polyline points="4.5,224.6 30.0,223.3 62.0,221.2 85.0,221.8 110.0,225.0 125.0,226.6 150.0,225.0 165.0,226.0 185.0,223.0 200.0,222.7 213.0,221.1 225.9,218.5 237.5,214.6 246.5,212.1 255.6,205.6 265.5,199.1 274.6,194.0 283.4,188.1 292.4,183.0 302.5,178.4 311.4,175.2 320.5,173.3 330.6,171.3 352.5,170.7 370.7,170.4 381.0,171.3 400.0,170.4 409.0,171.2 419.4,174.0 431.0,177.3 441.4,184.4 451.7,189.6 460.8,193.4 469.6,196.7 479.5,200.6 488.6,203.5 497.6,205.1 507.6,206.6 516.6,207.0 525.4,206.1 534.5,206.1 544.4,208.3 553.5,210.5 562.5,212.2 572.6,214.8 581.5,216.5 590.4,218.7 600.0,221.3 609.4,224.4 618.5,227.2 628.4,230.2 637.5,232.8 646.5,235.4 655.6,238.6 665.5,242.5 674.6,246.4 683.6,249.6 693.3,254.1 702.5,258.0 711.4,262.5 721.5,267.1 730.6,271.6 739.6,275.5 748.7,278.7 758.5,281.9 767.5,284.5 776.5,286.8 786.6,289.0 795.5,290.3 800.0,290.6 804.5,291.4 814.5,293.2 823.5,294.9 832.6,296.1 842.4,297.8 851.5,298.7 860.5,300.0 869.6,301.3 879.5,302.2 888.6,302.2 897.6,302.2 907.6,303.9 916.6,304.5 925.4,304.5 935.4,303.5 944.4,301.7 953.5,300.9 963.5,300.0 972.6,299.1 981.5,298.3 990.4,298.1 1000.0,297.5 1012.9,296.5 1028.4,293.9 1046.5,291.3 1065.5,289.1 1084.7,284.9 1093.3,281.6 1102.5,277.7 1111.4,274.5 1121.5,271.9 1130.6,269.7 1139.6,268.4 1149.6,266.8 1158.5,265.5 1167.5,265.5 1177.5,264.2 1186.6,264.2 1195.5,263.3 1200.0,263.6 1209.0,263.2 1219.4,261.5 1232.3,262.3 1275.0,262.5 1284.0,265.1 1293.0,266.8 1303.4,269.0 1316.6,270.9 1325.4,272.5 1335.4,274.4 1344.4,275.5 1353.5,276.5 1363.5,277.7 1372.6,278.7 1381.5,279.7 1391.3,281.3 1400.0,282.7 1412.9,282.6 1419.4,283.6 1437.5,284.1 1446.5,286.4 1456.5,287.4 1465.5,288.8 1474.6,290.3 1484.7,290.7 1516.4,291.0 1558.5,290.3 1567.5,289.0 1577.5,287.5" fill="none" stroke="#ff00ff" stroke-width="1"/>
<polyline points="4.5,217.5 15.0,217.5 30.0,220.0 50.0,222.5 69.0,226.6 90.0,228.0 110.0,232.0 125.0,232.4 135.0,230.5 150.0,227.5 160.0,226.9 172.0,222.5 190.0,215.0 200.0,213.3 209.4,210.8 218.5,207.5 227.5,204.3 237.5,199.8 246.5,195.9 255.6,184.3 265.5,175.5 274.6,167.2 283.4,160.0 292.4,153.3 302.5,145.5 311.4,141.4 319.0,140.0 330.6,143.6 339.6,146.5 348.7,157.1 358.5,164.9 367.5,172.6 376.6,181.7 386.5,189.4 395.5,195.9 400.0,198.4 413.6,203.8 423.5,206.6 432.6,209.0 441.5,210.9 451.5,212.6 460.5,214.5 469.6,212.8 479.5,211.5 488.6,209.6 497.6,208.7 507.6,208.6 516.6,207.4 525.4,204.4 534.5,202.5 544.4,203.4 553.5,205.7 562.5,210.9 572.6,216.7 581.5,223.8 590.4,230.3 600.0,235.2 609.4,242.5 618.5,250.2 628.4,256.1 637.5,260.6 646.5,263.2 655.6,265.1 665.5,267.1 674.6,269.0 683.6,270.3 693.3,272.2 702.5,274.8 711.4,278.7 721.5,281.9 730.6,285.2 739.6,289.0 748.7,292.9 758.5,297.4 767.5,301.3 776.5,303.9 786.6,305.6 795.5,305.6 800.0,304.8 809.0,304.3 823.5,303.0 832.6,302.6 842.4,301.7 851.5,300.9 860.5,300.4 869.6,300.0 879.5,299.8 888.6,299.6 897.6,301.3 907.6,303.9 916.6,304.5 925.4,304.8 935.4,304.5 944.4,303.5 953.5,301.7 963.5,300.0 972.6,298.3 981.5,297.0 990.4,295.2 1000.0,292.6 1009.4,289.1 1018.5,286.5 1028.4,284.9 1037.5,283.6 1046.5,281.4 1056.5,280.3 1065.5,279.7 1074.6,278.4 1084.7,275.2 1093.3,271.3 1102.5,266.1 1111.4,261.6 1121.5,257.3 1130.6,255.1 1139.6,253.8 1149.6,252.9 1158.5,252.3 1167.5,252.1 1177.5,253.8 1186.6,256.4 1195.5,260.9 1200.0,262.5 1205.4,264.2 1214.5,266.4 1223.5,268.0 1232.6,269.6 1242.4,270.9 1251.5,271.8 1260.5,271.6 1270.5,271.3 1279.5,270.3 1288.6,268.3 1298.5,269.3 1307.6,271.6 1316.6,273.1 1325.4,274.8 1335.4,277.1 1344.4,279.7 1353.5,282.3 1363.5,284.9 1372.6,287.7 1381.5,290.7 1391.3,292.3 1400.0,292.7 1412.9,292.3 1423.3,291.0 1433.6,289.7 1442.7,290.3 1469.8,290.7 1516.4,290.7 1526.7,291.6 1534.5,291.4 1542.2,290.3 1558.5,290.1 1567.5,288.4 1573.2,287.1 1577.5,285.4" fill="none" stroke="#ffff00" stroke-width="1"/>
<polyline points="4.5,218.5 13.6,222.0 23.3,228.0 32.3,226.5 41.6,224.8 51.5,225.5 60.5,225.5 69.6,223.5 78.5,226.0 88.6,229.5 97.6,233.5 106.4,238.0 116.4,239.5 125.4,238.5 134.5,232.0 144.5,226.0 153.5,217.0 162.5,212.0 172.6,209.0 181.5,208.0 190.4,206.8 199.7,207.5 209.4,209.5 219.4,208.2 227.5,201.0 237.5,191.1 246.5,184.3 249.0,177.8 255.6,157.5 265.5,142.9 274.6,133.9 283.4,128.0 292.4,122.5 302.5,132.6 311.4,141.0 320.5,147.8 330.6,157.3 339.6,171.5 348.4,183.6 358.5,190.1 367.5,199.1 376.6,204.3 386.5,206.9 395.5,208.2 404.4,209.6 413.6,209.3 423.5,207.0 432.6,209.0 441.5,211.3 451.5,215.4 460.5,219.6 469.6,217.4 479.5,214.1 488.6,207.7 497.6,201.8 507.6,196.4 516.6,198.9 525.4,195.4 534.5,197.1 544.4,205.1 553.5,214.8 562.5,224.5 572.6,238.0 581.5,249.0 590.4,254.0 600.0,254.8 609.4,258.0 618.5,258.3 628.4,263.8 637.5,267.1 646.5,270.3 655.6,272.9 665.5,274.6 674.6,274.8 683.6,274.6 693.3,272.9 702.5,276.5 711.4,282.6 721.5,289.0 730.6,294.9 739.6,301.3 748.7,307.8 758.5,310.8 767.5,311.7 776.5,311.3 786.6,308.4 795.5,303.9 804.5,298.7 814.5,296.5 823.5,296.5 832.6,297.8 842.4,300.0 851.5,302.0 860.5,302.2 869.6,300.7 879.5,300.4 888.6,300.4 897.6,300.7 907.6,304.3 916.6,308.4 925.4,308.4 935.4,309.5 944.4,305.2 953.5,300.4 963.5,292.7 972.6,289.7 981.5,285.8 990.4,284.5 1000.0,284.2 1018.5,284.2 1028.4,284.5 1037.5,282.9 1046.5,279.7 1056.5,277.1 1065.5,274.5 1074.6,272.3 1084.7,266.8 1093.3,264.8 1102.5,255.8 1111.4,248.7 1117.0,245.2 1121.5,243.9 1130.6,244.1 1139.6,245.2 1149.6,249.9 1158.5,254.7 1167.5,260.9 1177.5,264.2 1186.6,268.0 1195.5,271.3 1205.0,272.5 1214.5,271.2 1232.3,271.6 1251.7,271.8 1270.5,271.3 1279.5,270.3 1288.6,268.0 1298.5,268.6 1307.6,271.6 1316.6,274.2 1325.4,280.0 1335.4,286.2 1344.4,291.0 1353.5,292.7 1363.5,293.6 1372.6,293.9 1381.5,293.6 1391.3,293.3 1400.0,292.9 1409.4,291.4 1419.4,289.7 1428.4,287.5 1437.5,287.1 1446.5,288.8 1456.5,289.7 1465.5,291.9 1474.6,293.3 1484.7,294.5 1493.3,292.9 1502.5,291.0 1512.5,289.7 1521.5,288.4 1530.6,288.8 1540.5,289.7 1549.6,289.9 1558.5,289.7 1567.5,287.7 1573.2,283.9 1577.5,282.2" fill="none" stroke="#ffffff" stroke-width="1"/>
<path d="M265.5 62.5c3 2 7 2 11 4M265.5 62.5l0 3M265.5 62.5l3 -0.5" fill="none" stroke="#c0c0c0" stroke-width="1" shape-rendering="geometricPrecision"/>
<path d="M748.5 322.5h11M748.5 322.5l3 -2.5M748.5 322.5l3 3" fill="none" stroke="#c0c0c0" stroke-width="1" shape-rendering="geometricPrecision"/>
<rect x="256" y="359" width="19" height="21" fill="#ffff00"/>
<rect x="5" y="383" width="399.5" height="2" fill="#ff0000"/>
<rect x="404.5" y="384" width="8" height="1" fill="#ffff00"/>
<rect x="412.5" y="383" width="634.5" height="2" fill="#00ff00"/>
<rect x="1047" y="384" width="9.5" height="1" fill="#ffff00"/>
<rect x="1056.5" y="383" width="269" height="2" fill="#ff0000"/>
<rect x="1325.5" y="384" width="9.5" height="1" fill="#ffff00"/>
<rect x="1335" y="383" width="244" height="2" fill="#00ff00"/>
<rect x="709" y="385" width="25" height="19" fill="#ffffff"/><rect x="755" y="385" width="25" height="19" fill="#ffffff"/>
<path d="M673.5 399h2v8h-2zM669.5 400.5l5-6.5 5 6.5z" fill="#ff0000" shape-rendering="geometricPrecision"/>
<rect x="766" y="404" width="2" height="3" fill="#ff0000"/>
<rect x="5" y="874" width="1573" height="1" fill="#ff00ff"/>
<defs><linearGradient id="yb" x1="0" x2="1" y1="0" y2="0"><stop offset="0" stop-color="#6e6e00"/><stop offset="0.3" stop-color="#ffff00"/><stop offset="0.7" stop-color="#ffff00"/><stop offset="1" stop-color="#6e6e00"/></linearGradient></defs>
<rect x="448" y="815" width="7" height="59" fill="url(#yb)"/>
<rect x="451" y="815" width="1" height="59" fill="#ff00ff"/>
<rect x="457" y="795" width="7" height="79" fill="url(#yb)"/>
<rect x="460" y="795" width="1" height="79" fill="#ff00ff"/>
<rect x="466" y="830" width="7" height="44" fill="url(#yb)"/>
<rect x="469" y="830" width="1" height="44" fill="#ff00ff"/>
<rect x="476" y="854" width="7" height="20" fill="url(#yb)"/>
<rect x="479" y="854" width="1" height="20" fill="#ff00ff"/>
<rect x="559" y="812" width="7" height="62" fill="url(#yb)"/>
<rect x="562" y="812" width="1" height="62" fill="#ff00ff"/>
<rect x="569" y="789" width="7" height="85" fill="url(#yb)"/>
<rect x="572" y="789" width="1" height="85" fill="#ff00ff"/>
<rect x="578" y="835" width="7" height="39" fill="url(#yb)"/>
<rect x="581" y="835" width="1" height="39" fill="#ff00ff"/>
<rect x="587" y="840" width="7" height="34" fill="url(#yb)"/>
<rect x="590" y="840" width="1" height="34" fill="#ff00ff"/>
<rect x="597" y="845" width="7" height="29" fill="url(#yb)"/>
<rect x="600" y="845" width="1" height="29" fill="#ff00ff"/>
<rect x="606" y="822" width="7" height="52" fill="url(#yb)"/>
<rect x="609" y="822" width="1" height="52" fill="#ff00ff"/>
<rect x="615" y="802" width="7" height="72" fill="url(#yb)"/>
<rect x="618" y="802" width="1" height="72" fill="#ff00ff"/>
<rect x="625" y="789" width="7" height="85" fill="url(#yb)"/>
<rect x="628" y="789" width="1" height="85" fill="#ff00ff"/>
<rect x="634" y="831" width="7" height="43" fill="url(#yb)"/>
<rect x="637" y="831" width="1" height="43" fill="#ff00ff"/>
<rect x="643" y="803" width="7" height="71" fill="url(#yb)"/>
<rect x="646" y="803" width="1" height="71" fill="#ff00ff"/>
<rect x="652" y="838" width="7" height="36" fill="url(#yb)"/>
<rect x="655" y="838" width="1" height="36" fill="#ff00ff"/>
<rect x="662" y="863" width="7" height="11" fill="url(#yb)"/>
<rect x="665" y="863" width="1" height="11" fill="#ff00ff"/>
<rect x="671" y="865" width="7" height="9" fill="url(#yb)"/>
<rect x="674" y="865" width="1" height="9" fill="#ff00ff"/>
<rect x="680" y="869" width="7" height="5" fill="url(#yb)"/>
<rect x="683" y="869" width="1" height="5" fill="#ff00ff"/>
<rect x="690" y="871" width="7" height="3" fill="url(#yb)"/>
<rect x="693" y="871" width="1" height="3" fill="#ff00ff"/>
<rect x="699" y="842" width="7" height="32" fill="url(#yb)"/>
<rect x="702" y="842" width="1" height="32" fill="#ff00ff"/>
<rect x="708" y="820" width="7" height="54" fill="url(#yb)"/>
<rect x="711" y="820" width="1" height="54" fill="#ff00ff"/>
<rect x="718" y="847" width="7" height="27" fill="url(#yb)"/>
<rect x="721" y="847" width="1" height="27" fill="#ff00ff"/>
<rect x="727" y="824" width="7" height="50" fill="url(#yb)"/>
<rect x="730" y="824" width="1" height="50" fill="#ff00ff"/>
<rect x="736" y="811" width="7" height="63" fill="url(#yb)"/>
<rect x="739" y="811" width="1" height="63" fill="#ff00ff"/>
<rect x="745" y="781" width="7" height="93" fill="url(#yb)"/>
<rect x="748" y="781" width="1" height="93" fill="#ff00ff"/>
<rect x="755" y="828" width="7" height="46" fill="url(#yb)"/>
<rect x="758" y="828" width="1" height="46" fill="#ff00ff"/>
<rect x="764" y="851" width="7" height="23" fill="url(#yb)"/>
<rect x="767" y="851" width="1" height="23" fill="#ff00ff"/>
<rect x="773" y="862" width="7" height="12" fill="url(#yb)"/>
<rect x="776" y="862" width="1" height="12" fill="#ff00ff"/>
<rect x="1332" y="845" width="7" height="29" fill="url(#yb)"/>
<rect x="1335" y="845" width="1" height="29" fill="#ff00ff"/>
<rect x="1341" y="855" width="7" height="19" fill="url(#yb)"/>
<rect x="1344" y="855" width="1" height="19" fill="#ff00ff"/>
<rect x="1350" y="860" width="7" height="14" fill="url(#yb)"/>
<rect x="1353" y="860" width="1" height="14" fill="#ff00ff"/>
<rect x="1360" y="864" width="7" height="10" fill="url(#yb)"/>
<rect x="1363" y="864" width="1" height="10" fill="#ff00ff"/>
<rect x="1369" y="869" width="7" height="5" fill="url(#yb)"/>
<rect x="1372" y="869" width="1" height="5" fill="#ff00ff"/>
<rect x="1378" y="871" width="7" height="3" fill="url(#yb)"/>
<rect x="1381" y="871" width="1" height="3" fill="#ff00ff"/>
<rect x="1388" y="873" width="7" height="1" fill="url(#yb)"/>
<rect x="1391" y="873" width="1" height="1" fill="#ff00ff"/>
<rect x="1397" y="873" width="7" height="1" fill="url(#yb)"/>
<rect x="1400" y="873" width="1" height="1" fill="#ff00ff"/>
<rect x="441" y="829" width="1" height="45" fill="#ff00ff"/>
<rect x="488" y="864" width="1" height="10" fill="#ff00ff"/>
<rect x="497" y="869" width="1" height="5" fill="#ff00ff"/>
<rect x="507" y="871" width="1" height="3" fill="#ff00ff"/>
<rect x="516" y="872" width="1" height="2" fill="#ff00ff"/>
<rect x="525" y="873" width="1" height="1" fill="#ff00ff"/>
<rect x="534" y="873" width="1" height="1" fill="#ff00ff"/>
<rect x="544" y="826" width="1" height="48" fill="#ff00ff"/>
<rect x="553" y="850" width="1" height="24" fill="#ff00ff"/>
<rect x="786" y="867" width="1" height="7" fill="#ff00ff"/>
<rect x="795" y="870" width="1" height="4" fill="#ff00ff"/>
<rect x="804" y="872" width="1" height="2" fill="#ff00ff"/>
<rect x="814" y="873" width="1" height="1" fill="#ff00ff"/>
<rect x="823" y="873" width="1" height="1" fill="#ff00ff"/>
<rect x="1307" y="857" width="1" height="17" fill="#ff00ff"/>
<rect x="1316" y="866" width="1" height="8" fill="#ff00ff"/>
<rect x="1325" y="853" width="1" height="21" fill="#ff00ff"/>
<rect x="1409" y="873" width="1" height="1" fill="#ff00ff"/>
<polyline points="117.9,750.0 125.7,745.3 135.2,724.4 144.4,709.0" fill="none" stroke="#f0f0f0" stroke-width="1"/>
<polyline points="283.5,550.2 293.0,551.6 301.5,553.7 303.7,556.0 314.0,575.9" fill="none" stroke="#f0f0f0" stroke-width="1"/>
<polyline points="472.1,809.7 478.9,808.7 482.3,805.5 488.6,798.4 497.7,792.2 507.4,788.2 516.2,788.2" fill="none" stroke="#f0f0f0" stroke-width="1"/>
<polyline points="540.9,789.6 544.9,793.9 549.5,801.9" fill="none" stroke="#f0f0f0" stroke-width="1"/>
<polyline points="640.4,852.1 648.9,852.1 651.8,849.6 659.2,848.7 662.0,850.5 669.4,850.5 671.1,849.3 677.4,848.5 683.6,844.5 688.7,844.5" fill="none" stroke="#f0f0f0" stroke-width="1"/>
<polyline points="706.4,847.4 708.0,849.1 714.9,849.1 717.2,847.4 726.8,847.4 734.2,848.5 736.5,850.8 743.3,851.7 753.6,853.6 761.5,853.6 765.0,850.8 767.2,850.5" fill="none" stroke="#f0f0f0" stroke-width="1"/>
<polyline points="903.1,769.6 910.4,777.5 916.7,786.7 922.2,775.9 926.1,768.6" fill="none" stroke="#f0f0f0" stroke-width="1"/>
<polyline points="932.0,759.8 936.5,752.5" fill="none" stroke="#f0f0f0" stroke-width="1"/>
<polyline points="1103.0,454.4 1108.0,456.6 1114.6,462.8 1121.3,471.7 1124.2,482.4 1128.0,491.8 1129.7,500.0" fill="none" stroke="#f0f0f0" stroke-width="1"/>
<polyline points="1393.0,823.8 1400.8,820.1 1410.1,811.7 1416.6,808.0 1419.4,807.0" fill="none" stroke="#f0f0f0" stroke-width="1"/>
<polyline points="1476.2,803.3 1484.6,795.0 1486.8,790.3" fill="none" stroke="#f0f0f0" stroke-width="1"/>
<polyline points="1563.2,735.6 1564.2,737.2" fill="none" stroke="#f0f0f0" stroke-width="1"/>
<polyline points="1571.2,706.6 1572.5,701.0" fill="none" stroke="#f0f0f0" stroke-width="1"/>
<polyline points="209.3,664.1 210.3,664.8" fill="none" stroke="#f0f0f0" stroke-width="1"/>
<rect x="-4.5" y="553.5" width="18" height="76" fill="#000" stroke="#00ff00" stroke-width="1"/>
<rect x="4.5" y="579.5" width="18" height="84" fill="#000" stroke="#00ff00" stroke-width="1"/>
<rect x="14.5" y="604.5" width="18" height="90" fill="#000" stroke="#00ff00" stroke-width="1"/>
<rect x="23.5" y="628.5" width="18" height="91" fill="#000" stroke="#00ff00" stroke-width="1"/>
<rect x="32.5" y="647.5" width="18" height="87" fill="#000" stroke="#00ff00" stroke-width="1"/>
<rect x="42.5" y="663.5" width="18" height="78" fill="#000" stroke="#00ff00" stroke-width="1"/>
<rect x="51.5" y="672.5" width="18" height="65" fill="#000" stroke="#00ff00" stroke-width="1"/>
<rect x="60.5" y="679.5" width="18" height="54" fill="#000" stroke="#00ff00" stroke-width="1"/>
<rect x="69.5" y="692.5" width="18" height="52" fill="#000" stroke="#00ff00" stroke-width="1"/>
<rect x="79.5" y="707.5" width="18" height="54" fill="#000" stroke="#00ff00" stroke-width="1"/>
<rect x="88.5" y="726.5" width="18" height="63" fill="#000" stroke="#00ff00" stroke-width="1"/>
<rect x="97.5" y="741.5" width="18" height="61" fill="#000" stroke="#00ff00" stroke-width="1"/>
<rect x="107.5" y="750.5" width="18" height="52" fill="#000" stroke="#00ff00" stroke-width="1"/>
<rect x="116.5" y="750.5" width="18" height="39" fill="#000" stroke="#00ff00" stroke-width="1"/>
<rect x="125.5" y="742.5" width="18" height="13" fill="#000" stroke="#00ff00" stroke-width="1"/>
<rect x="135.5" y="719.5" width="18" height="10" fill="#000" stroke="#ff0000" stroke-width="1"/>
<rect x="144.5" y="680.5" width="18" height="31" fill="#000" stroke="#ff0000" stroke-width="1"/>
<rect x="153.5" y="658.5" width="18" height="39" fill="#000" stroke="#ff0000" stroke-width="1"/>
<rect x="163.5" y="642.5" width="18" height="42" fill="#000" stroke="#ff0000" stroke-width="1"/>
<rect x="172.5" y="635.5" width="18" height="40" fill="#000" stroke="#ff0000" stroke-width="1"/>
<rect x="181.5" y="628.5" width="18" height="39" fill="#000" stroke="#ff0000" stroke-width="1"/>
<rect x="190.5" y="633.5" width="18" height="30" fill="#000" stroke="#ff0000" stroke-width="1"/>
<rect x="200.5" y="644.5" width="18" height="18" fill="#000" stroke="#ff0000" stroke-width="1"/>
<rect x="209.5" y="644.5" width="18" height="17" fill="#000" stroke="#ff0000" stroke-width="1"/>
<rect x="218.5" y="623.5" width="18" height="26" fill="#000" stroke="#ff0000" stroke-width="1"/>
<rect x="228.5" y="585.5" width="18" height="44" fill="#000" stroke="#ff0000" stroke-width="1"/>
<rect x="237.5" y="547.5" width="18" height="59" fill="#000" stroke="#ff0000" stroke-width="1"/>
<rect x="246.5" y="492.5" width="18" height="82" fill="#000" stroke="#ff0000" stroke-width="1"/>
<rect x="256.5" y="475.5" width="18" height="81" fill="#000" stroke="#ff0000" stroke-width="1"/>
<rect x="265.5" y="486.5" width="18" height="63" fill="#000" stroke="#ff0000" stroke-width="1"/>
<rect x="274.5" y="503.5" width="18" height="44" fill="#000" stroke="#ff0000" stroke-width="1"/>
<rect x="283.5" y="519.5" width="18" height="29" fill="#000" stroke="#ff0000" stroke-width="1"/>
<rect x="293.5" y="536.5" width="18" height="15" fill="#000" stroke="#ff0000" stroke-width="1"/>
<rect x="302.5" y="562.5" width="18" height="4" fill="#000" stroke="#00ff00" stroke-width="1"/>
<rect x="311.5" y="576.5" width="18" height="21" fill="#000" stroke="#00ff00" stroke-width="1"/>
<rect x="321.5" y="595.5" width="18" height="40" fill="#000" stroke="#00ff00" stroke-width="1"/>
<rect x="330.5" y="618.5" width="18" height="57" fill="#000" stroke="#00ff00" stroke-width="1"/>
<rect x="339.5" y="640.5" width="18" height="69" fill="#000" stroke="#00ff00" stroke-width="1"/>
<rect x="349.5" y="661.5" width="18" height="73" fill="#000" stroke="#00ff00" stroke-width="1"/>
<rect x="358.5" y="680.5" width="18" height="75" fill="#000" stroke="#00ff00" stroke-width="1"/>
<rect x="367.5" y="699.5" width="18" height="75" fill="#000" stroke="#00ff00" stroke-width="1"/>
<rect x="377.5" y="715.5" width="18" height="72" fill="#000" stroke="#00ff00" stroke-width="1"/>
<rect x="386.5" y="727.5" width="18" height="63" fill="#000" stroke="#00ff00" stroke-width="1"/>
<rect x="395.5" y="736.5" width="18" height="54" fill="#000" stroke="#00ff00" stroke-width="1"/>
<rect x="404.5" y="742.5" width="18" height="45" fill="#000" stroke="#00ff00" stroke-width="1"/>
<rect x="414.5" y="749.5" width="18" height="39" fill="#000" stroke="#00ff00" stroke-width="1"/>
<rect x="423.5" y="760.5" width="18" height="40" fill="#000" stroke="#00ff00" stroke-width="1"/>
<rect x="432.5" y="775.5" width="18" height="48" fill="#000" stroke="#00ff00" stroke-width="1"/>
<rect x="442.5" y="791.5" width="18" height="53" fill="#000" stroke="#00ff00" stroke-width="1"/>
<rect x="451.5" y="806.5" width="18" height="55" fill="#000" stroke="#00ff00" stroke-width="1"/>
<rect x="460.5" y="810.5" width="18" height="41" fill="#000" stroke="#00ff00" stroke-width="1"/>
<rect x="470.5" y="810.5" width="18" height="30" fill="#000" stroke="#00ff00" stroke-width="1"/>
<rect x="479.5" y="806.5" width="18" height="13" fill="#000" stroke="#00ff00" stroke-width="1"/>
<rect x="488.5" y="802.5" width="18" height="2" fill="#000" stroke="#00ff00" stroke-width="1"/>
<rect x="498.5" y="794.5" width="18" height="4" fill="#000" stroke="#ff0000" stroke-width="1"/>
<rect x="507.5" y="790.5" width="18" height="5" fill="#000" stroke="#ff0000" stroke-width="1"/>
<rect x="516.5" y="781.5" width="18" height="10" fill="#000" stroke="#ff0000" stroke-width="1"/>
<rect x="525.5" y="779.5" width="18" height="10" fill="#000" stroke="#ff0000" stroke-width="1"/>
<rect x="535" y="792" width="19" height="2" fill="#ff0000"/>
<rect x="544.5" y="802.5" width="18" height="11" fill="#000" stroke="#00ff00" stroke-width="1"/>
<rect x="553.5" y="813.5" width="18" height="22" fill="#000" stroke="#00ff00" stroke-width="1"/>
<rect x="563.5" y="823.5" width="18" height="30" fill="#000" stroke="#00ff00" stroke-width="1"/>
<rect x="572.5" y="829.5" width="18" height="27" fill="#000" stroke="#00ff00" stroke-width="1"/>
<rect x="581.5" y="833.5" width="18" height="24" fill="#000" stroke="#00ff00" stroke-width="1"/>
<rect x="591.5" y="838.5" width="18" height="22" fill="#000" stroke="#00ff00" stroke-width="1"/>
<rect x="600.5" y="843.5" width="18" height="22" fill="#000" stroke="#00ff00" stroke-width="1"/>
<rect x="609.5" y="848.5" width="18" height="21" fill="#000" stroke="#00ff00" stroke-width="1"/>
<rect x="619.5" y="851.5" width="18" height="19" fill="#000" stroke="#00ff00" stroke-width="1"/>
<rect x="628.5" y="854.5" width="18" height="16" fill="#000" stroke="#00ff00" stroke-width="1"/>
<rect x="637.5" y="856.5" width="18" height="13" fill="#000" stroke="#00ff00" stroke-width="1"/>
<rect x="646.5" y="856.5" width="18" height="9" fill="#000" stroke="#00ff00" stroke-width="1"/>
<rect x="656.5" y="856.5" width="18" height="6" fill="#000" stroke="#00ff00" stroke-width="1"/>
<rect x="665.5" y="854.5" width="18" height="2" fill="#000" stroke="#00ff00" stroke-width="1"/>
<rect x="674.5" y="848.5" width="18" height="3" fill="#000" stroke="#ff0000" stroke-width="1"/>
<rect x="684.5" y="845.5" width="18" height="4" fill="#000" stroke="#ff0000" stroke-width="1"/>
<rect x="693.5" y="849.5" width="18" height="2" fill="#000" stroke="#ff0000" stroke-width="1"/>
<rect x="702.5" y="853.5" width="18" height="2" fill="#000" stroke="#00ff00" stroke-width="1"/>
<rect x="712" y="853" width="19" height="3" fill="#00ff00"/>
<rect x="721" y="853" width="19" height="3" fill="#00ff00"/>
<rect x="730.5" y="854.5" width="18" height="3" fill="#000" stroke="#00ff00" stroke-width="1"/>
<rect x="739.5" y="856.5" width="18" height="4" fill="#000" stroke="#00ff00" stroke-width="1"/>
<rect x="749.5" y="858.5" width="18" height="4" fill="#000" stroke="#00ff00" stroke-width="1"/>
<rect x="758" y="855" width="19" height="1" fill="#ff0000"/>
<rect x="767.5" y="840.5" width="18" height="9" fill="#000" stroke="#ff0000" stroke-width="1"/>
<rect x="777.5" y="822.5" width="18" height="18" fill="#000" stroke="#ff0000" stroke-width="1"/>
<rect x="786.5" y="806.5" width="18" height="24" fill="#000" stroke="#ff0000" stroke-width="1"/>
<rect x="795.5" y="788.5" width="18" height="31" fill="#000" stroke="#ff0000" stroke-width="1"/>
<rect x="805.5" y="778.5" width="18" height="33" fill="#000" stroke="#ff0000" stroke-width="1"/>
<rect x="814.5" y="779.5" width="18" height="27" fill="#000" stroke="#ff0000" stroke-width="1"/>
<rect x="823.5" y="783.5" width="18" height="21" fill="#000" stroke="#ff0000" stroke-width="1"/>
<rect x="833.5" y="791.5" width="18" height="14" fill="#000" stroke="#ff0000" stroke-width="1"/>
<rect x="842.5" y="790.5" width="18" height="12" fill="#000" stroke="#ff0000" stroke-width="1"/>
<rect x="851.5" y="776.5" width="18" height="18" fill="#000" stroke="#ff0000" stroke-width="1"/>
<rect x="860.5" y="761.5" width="18" height="24" fill="#000" stroke="#ff0000" stroke-width="1"/>
<rect x="870.5" y="747.5" width="18" height="29" fill="#000" stroke="#ff0000" stroke-width="1"/>
<rect x="879.5" y="736.5" width="18" height="31" fill="#000" stroke="#ff0000" stroke-width="1"/>
<rect x="888.5" y="740.5" width="18" height="24" fill="#000" stroke="#ff0000" stroke-width="1"/>
<rect x="898.5" y="760.5" width="18" height="9" fill="#000" stroke="#ff0000" stroke-width="1"/>
<rect x="907.5" y="778.5" width="18" height="5" fill="#000" stroke="#00ff00" stroke-width="1"/>
<rect x="916" y="776" width="19" height="3" fill="#00ff00"/>
<rect x="926.5" y="760.5" width="18" height="9" fill="#000" stroke="#ff0000" stroke-width="1"/>
<rect x="935.5" y="720.5" width="18" height="31" fill="#000" stroke="#ff0000" stroke-width="1"/>
<rect x="944.5" y="675.5" width="18" height="52" fill="#000" stroke="#ff0000" stroke-width="1"/>
<rect x="954.5" y="623.5" width="18" height="74" fill="#000" stroke="#ff0000" stroke-width="1"/>
<rect x="963.5" y="579.5" width="18" height="89" fill="#000" stroke="#ff0000" stroke-width="1"/>
<rect x="972.5" y="542.5" width="18" height="97" fill="#000" stroke="#ff0000" stroke-width="1"/>
<rect x="981.5" y="524.5" width="18" height="94" fill="#000" stroke="#ff0000" stroke-width="1"/>
<rect x="991.5" y="520.5" width="18" height="82" fill="#000" stroke="#ff0000" stroke-width="1"/>
<rect x="1000.5" y="514.5" width="18" height="74" fill="#000" stroke="#ff0000" stroke-width="1"/>
<rect x="1009.5" y="508.5" width="18" height="67" fill="#000" stroke="#ff0000" stroke-width="1"/>
<rect x="1019.5" y="504.5" width="18" height="60" fill="#000" stroke="#ff0000" stroke-width="1"/>
<rect x="1028.5" y="497.5" width="18" height="55" fill="#000" stroke="#ff0000" stroke-width="1"/>
<rect x="1037.5" y="472.5" width="18" height="62" fill="#000" stroke="#ff0000" stroke-width="1"/>
<rect x="1047.5" y="454.5" width="18" height="63" fill="#000" stroke="#ff0000" stroke-width="1"/>
<rect x="1056.5" y="442.5" width="18" height="61" fill="#000" stroke="#ff0000" stroke-width="1"/>
<rect x="1065.5" y="434.5" width="18" height="57" fill="#000" stroke="#ff0000" stroke-width="1"/>
<rect x="1075.5" y="416.5" width="18" height="59" fill="#000" stroke="#ff0000" stroke-width="1"/>
<rect x="1084.5" y="404.5" width="18" height="57" fill="#000" stroke="#ff0000" stroke-width="1"/>
<rect x="1093.5" y="394.5" width="18" height="55" fill="#000" stroke="#ff0000" stroke-width="1"/>
<rect x="1102.5" y="406.5" width="18" height="40" fill="#000" stroke="#ff0000" stroke-width="1"/>
<rect x="1112.5" y="432.5" width="18" height="19" fill="#000" stroke="#ff0000" stroke-width="1"/>
<rect x="1121.5" y="470.5" width="18" height="11" fill="#000" stroke="#00ff00" stroke-width="1"/>
<rect x="1130.5" y="490.5" width="18" height="33" fill="#000" stroke="#00ff00" stroke-width="1"/>
<rect x="1140.5" y="510.5" width="18" height="49" fill="#000" stroke="#00ff00" stroke-width="1"/>
<rect x="1149.5" y="527.5" width="18" height="56" fill="#000" stroke="#00ff00" stroke-width="1"/>
<rect x="1158.5" y="548.5" width="18" height="66" fill="#000" stroke="#00ff00" stroke-width="1"/>
<rect x="1168.5" y="569.5" width="18" height="71" fill="#000" stroke="#00ff00" stroke-width="1"/>
<rect x="1177.5" y="590.5" width="18" height="76" fill="#000" stroke="#00ff00" stroke-width="1"/>
<rect x="1186.5" y="609.5" width="18" height="76" fill="#000" stroke="#00ff00" stroke-width="1"/>
<rect x="1195.5" y="619.5" width="18" height="65" fill="#000" stroke="#00ff00" stroke-width="1"/>
<rect x="1205.5" y="626.5" width="18" height="52" fill="#000" stroke="#00ff00" stroke-width="1"/>
<rect x="1214.5" y="632.5" width="18" height="43" fill="#000" stroke="#00ff00" stroke-width="1"/>
<rect x="1223.5" y="641.5" width="18" height="39" fill="#000" stroke="#00ff00" stroke-width="1"/>
<rect x="1233.5" y="651.5" width="18" height="39" fill="#000" stroke="#00ff00" stroke-width="1"/>
<rect x="1242.5" y="661.5" width="18" height="40" fill="#000" stroke="#00ff00" stroke-width="1"/>
<rect x="1251.5" y="671.5" width="18" height="41" fill="#000" stroke="#00ff00" stroke-width="1"/>
<rect x="1261.5" y="683.5" width="18" height="42" fill="#000" stroke="#00ff00" stroke-width="1"/>
<rect x="1270.5" y="690.5" width="18" height="38" fill="#000" stroke="#00ff00" stroke-width="1"/>
<rect x="1279.5" y="694.5" width="18" height="33" fill="#000" stroke="#00ff00" stroke-width="1"/>
<rect x="1289.5" y="703.5" width="18" height="32" fill="#000" stroke="#00ff00" stroke-width="1"/>
<rect x="1298.5" y="718.5" width="18" height="41" fill="#000" stroke="#00ff00" stroke-width="1"/>
<rect x="1307.5" y="737.5" width="18" height="53" fill="#000" stroke="#00ff00" stroke-width="1"/>
<rect x="1316.5" y="759.5" width="18" height="66" fill="#000" stroke="#00ff00" stroke-width="1"/>
<rect x="1326.5" y="781.5" width="18" height="72" fill="#000" stroke="#00ff00" stroke-width="1"/>
<rect x="1335.5" y="796.5" width="18" height="69" fill="#000" stroke="#00ff00" stroke-width="1"/>
<rect x="1344.5" y="806.5" width="18" height="59" fill="#000" stroke="#00ff00" stroke-width="1"/>
<rect x="1354.5" y="812.5" width="18" height="47" fill="#000" stroke="#00ff00" stroke-width="1"/>
<rect x="1363.5" y="818.5" width="18" height="38" fill="#000" stroke="#00ff00" stroke-width="1"/>
<rect x="1372.5" y="822.5" width="18" height="32" fill="#000" stroke="#00ff00" stroke-width="1"/>
<rect x="1382.5" y="825.5" width="18" height="25" fill="#000" stroke="#00ff00" stroke-width="1"/>
<rect x="1391.5" y="824.5" width="18" height="17" fill="#000" stroke="#00ff00" stroke-width="1"/>
<rect x="1400.5" y="820.5" width="18" height="4" fill="#000" stroke="#00ff00" stroke-width="1"/>
<rect x="1410.5" y="809.5" width="18" height="5" fill="#000" stroke="#ff0000" stroke-width="1"/>
<rect x="1419.5" y="797.5" width="18" height="11" fill="#000" stroke="#ff0000" stroke-width="1"/>
<rect x="1428.5" y="782.5" width="18" height="18" fill="#000" stroke="#ff0000" stroke-width="1"/>
<rect x="1437.5" y="787.5" width="18" height="13" fill="#000" stroke="#ff0000" stroke-width="1"/>
<rect x="1447.5" y="792.5" width="18" height="8" fill="#000" stroke="#ff0000" stroke-width="1"/>
<rect x="1456.5" y="801.5" width="18" height="2" fill="#000" stroke="#ff0000" stroke-width="1"/>
<rect x="1465" y="804" width="19" height="2" fill="#00ff00"/>
<rect x="1475.5" y="795.5" width="18" height="5" fill="#000" stroke="#ff0000" stroke-width="1"/>
<rect x="1484.5" y="770.5" width="18" height="19" fill="#000" stroke="#ff0000" stroke-width="1"/>
<rect x="1493.5" y="748.5" width="18" height="28" fill="#000" stroke="#ff0000" stroke-width="1"/>
<rect x="1503.5" y="731.5" width="18" height="34" fill="#000" stroke="#ff0000" stroke-width="1"/>
<rect x="1512.5" y="726.5" width="18" height="32" fill="#000" stroke="#ff0000" stroke-width="1"/>
<rect x="1521.5" y="731.5" width="18" height="25" fill="#000" stroke="#ff0000" stroke-width="1"/>
<rect x="1530.5" y="738.5" width="18" height="17" fill="#000" stroke="#ff0000" stroke-width="1"/>
<rect x="1540.5" y="732.5" width="18" height="18" fill="#000" stroke="#ff0000" stroke-width="1"/>
<rect x="1549.5" y="737.5" width="18" height="12" fill="#000" stroke="#ff0000" stroke-width="1"/>
<rect x="1558.5" y="707.5" width="18" height="28" fill="#000" stroke="#ff0000" stroke-width="1"/>
<rect x="1568.5" y="634.5" width="18" height="66" fill="#000" stroke="#ff0000" stroke-width="1"/>
<rect x="734" y="903" width="39" height="50" fill="#0000ff"/>
</svg>
<span class="t " style="left:279px;top:62px;color:#c0c0c0;">21.00</span>
<span class="t " style="left:761px;top:318px;color:#c0c0c0;">8.82</span>
<span class="t" style="left:248px;top:325px;background:#880000;color:#fff;width:12.5px;height:12.5px;padding:0.5px 0 0 0.5px">涨</span>
<span class="t" style="left:696px;top:325px;background:#007800;color:#fff;width:12.5px;height:12.5px;padding:0.5px 0 0 0.5px">减</span>
<span class="t" style="left:1095px;top:325px;background:#007878;color:#fff;width:12.5px;height:12.5px;padding:0.5px 0 0 0.5px">停</span>
<span class="t" style="left:1356px;top:325px;background:#002c78;color:#fff;width:12.5px;height:12.5px;padding:0.5px 0 0 0.5px">财</span>
<span class="t " style="left:1626px;top:78px;color:#ff3232;">20.00</span>
<span class="t " style="left:1626px;top:121px;color:#ff3232;">18.00</span>
<span class="t " style="left:1626px;top:164px;color:#ff3232;">16.00</span>
<span class="t " style="left:1626px;top:206px;color:#ff3232;">14.00</span>
<span class="t " style="left:1626px;top:249px;color:#ff3232;">12.00</span>
<span class="t " style="left:1626px;top:292px;color:#ff3232;">10.00</span>
<span class="t " style="left:1626px;top:379px;color:#ff3232;">100.0</span>
<span class="t " style="left:1626px;top:429px;color:#ff3232;">90.00</span>
<span class="t " style="left:1626px;top:477px;color:#ff3232;">80.00</span>
<span class="t " style="left:1626px;top:527px;color:#ff3232;">70.00</span>
<span class="t " style="left:1626px;top:576px;color:#ff3232;">60.00</span>
<span class="t " style="left:1626px;top:625px;color:#ff3232;">50.00</span>
<span class="t " style="left:1626px;top:723px;color:#ff3232;">30.00</span>
<span class="t " style="left:1626px;top:771px;color:#ff3232;">20.00</span>
<div class="b" style="left:1612px;top:665px;width:49px;height:16px;background:#000080;border:1px solid #c00000;border-left:none"></div>
<span class="t " style="left:1612px;top:667px;color:#e8e8e8;">39.31</span>
<svg width="14" height="14" style="left:1px;top:341px" viewBox="0 0 14 14"><circle cx="7" cy="7" r="5.8" fill="#6a6a6a"/><path d="M4 5.8L7 8.8l3-3" fill="none" stroke="#dcdcdc" stroke-width="1.4"/></svg>
<span class="t " style="left:18px;top:342px;color:#d0d0d0;">神龙大海捞月</span>
<span class="t " style="left:115px;top:342px;color:#00e000;">VAR17: 40.84</span>
<span class="t " style="left:249px;top:342px;color:#e8e8e8;">: 100.00</span>
<span class="t " style="left:298px;top:342px;color:#ffff00;">: 0.00</span>
<span class="t " style="left:338px;top:342px;color:#00ff00;">: 100.00</span>
<span class="t " style="left:404px;top:361px;color:#ff8484;">软件服务 上海板块 主题投资:食品安全 华为概念 国产软件 大数据 区块链 数字货币 工业大麻</span>
<span class="t " style="left:18px;top:391px;color:#00ffff;">主营同比增长：254.55%</span>
<span class="t " style="left:18px;top:418px;color:#ff0000;">净利润同比增长：13.32%</span>
<span class="t " style="left:725px;top:391px;color:#ffff00;">【短线】</span>
<span class="t " style="left:807px;top:391px;color:#ff0000;">上涨</span>
<span class="t " style="left:856px;top:391px;color:#8c8c8c;">48.818</span>
<span class="t " style="left:725px;top:415px;color:#ffff00;">【中线】</span>
<span class="t " style="left:807px;top:415px;color:#00ff00;">调整</span>
<span class="t " style="left:856px;top:415px;color:#8c8c8c;">13.591</span>
<span class="t " style="left:725px;top:439px;color:#ffff00;">【长线】</span>
<span class="t " style="left:807px;top:439px;color:#00ff00;">调整</span>
<span class="t " style="left:856px;top:439px;color:#8c8c8c;">12.674</span>
<div class="lab" style="left:184px;top:394px;width:224px;height:34px;font-size:23px;letter-spacing:2.9px;color:#ffd400;text-shadow:1px 1px 0 #a85000,0 1px 0 #c87800;padding:2.5px 0 0 5px">黄块<span style="display:inline-block;width:54px;letter-spacing:0;text-align:center;overflow:hidden;vertical-align:top;height:26px"><span style="display:inline-block;transform:scaleX(1.55);-webkit-text-stroke:0.6px currentColor">——</span></span>中线高点</div>
<div class="lab" style="left:653px;top:470px;width:267px;height:32px;font-size:23px;letter-spacing:2.2px;color:#fff4ec;text-shadow:1px 1px 0 #e04020,0 1px 0 #d0a000;padding:1.5px 0 0 8px">白块<span style="display:inline-block;width:54px;letter-spacing:0;text-align:center;overflow:hidden;vertical-align:top;height:26px"><span style="display:inline-block;transform:scaleX(1.55);-webkit-text-stroke:0.6px currentColor">——</span></span>中线绝对底部</div>
<div class="lab" style="left:1140px;top:388px;width:229px;height:33px;font-size:22px;letter-spacing:3.6px;color:#ffe8e0;text-shadow:1px 1px 0 #d03020,0 1px 0 #d0b000;padding:2px 0 0 7px">红柱到<span style="letter-spacing:0.5px">100</span>短线高点</div>
<div class="lab" style="left:1350px;top:899px;width:203px;height:33px;font-size:22px;letter-spacing:3.6px;color:#c8b400;text-shadow:1px 0 0 #20d020,-1px 0 0 #c85010,0 1px 0 #c85010;padding:2.5px 0 0 7px">绿柱到<span style="letter-spacing:3px">1</span>短线底部</div>
<span class="t " style="left:376px;top:892px;color:#c8ff00;font-family:'Liberation Serif',serif;font-size:13px">$</span>
<span class="t " style="left:562px;top:892px;color:#c8ff00;font-family:'Liberation Serif',serif;font-size:13px">$</span>
<span class="t " style="left:1316px;top:892px;color:#c8ff00;font-family:'Liberation Serif',serif;font-size:13px">$</span>
<span class="t " style="left:702px;top:907px;color:#ffffff;">★小买</span>
<span class="t " style="left:748px;top:931px;color:#00ff00;">★大海捞月</span>
<div class="b" style="left:2px;top:933px;width:240px;height:31px;background:#5000ff;border:1px solid #c0c0c0"></div>
<span class="t " style="left:18px;top:942px;color:#ff8a80;">神龙大海捞月操作系统----1198财富---</span>
<span class="t n" style="left:1695.5px;top:28px;color:#ffff00;">300469</span>
<span class="t " style="left:1747px;top:26px;color:#00e0e0;font-size:16px">信息发展</span>
<div class="b" style="left:1662px;top:47px;width:233px;height:1px;background:#c00000;"></div>
<div class="b" style="left:1662px;top:67px;width:233px;height:1px;background:#c00000;"></div>
<div class="b" style="left:1662px;top:164px;width:233px;height:1px;background:#c00000;"></div>
<div class="b" style="left:1662px;top:261px;width:233px;height:1px;background:#c00000;"></div>
<div class="b" style="left:1662px;top:358px;width:233px;height:1px;background:#c00000;"></div>
<div class="b" style="left:1662px;top:419px;width:233px;height:1px;background:#c00000;"></div>
<span class="t l" style="left:1664px;top:50px;">委比</span>
<span class="t n" style="right:142.5px;top:50.5px;color:#ff3232;">30.10%</span>
<span class="t l" style="left:1781px;top:50px;">委差</span>
<span class="t n" style="right:26.5px;top:50.5px;color:#ff3232;">1104</span>
<span class="t l" style="left:1664px;top:70px;">卖五</span>
<span class="t n" style="right:142.5px;top:70.5px;color:#ff3232;">11.65</span>
<span class="t n" style="right:26.5px;top:70.5px;color:#c8c800;">201</span>
<span class="t l" style="left:1664px;top:89.1px;">卖四</span>
<span class="t n" style="right:142.5px;top:89.6px;color:#ff3232;">11.64</span>
<span class="t n" style="right:26.5px;top:89.6px;color:#c8c800;">139</span>
<span class="t l" style="left:1664px;top:108.2px;">卖三</span>
<span class="t n" style="right:142.5px;top:108.7px;color:#ff3232;">11.63</span>
<span class="t n" style="right:26.5px;top:108.7px;color:#c8c800;">195</span>
<span class="t l" style="left:1664px;top:127.3px;">卖二</span>
<span class="t n" style="right:142.5px;top:127.8px;color:#ff3232;">11.62</span>
<span class="t n" style="right:26.5px;top:127.8px;color:#c8c800;">78</span>
<span class="t l" style="left:1664px;top:146.4px;">卖一</span>
<span class="t n" style="right:142.5px;top:146.9px;color:#ff3232;">11.61</span>
<span class="t n" style="right:26.5px;top:146.9px;color:#c8c800;">669</span>
<span class="t l" style="left:1664px;top:167.8px;">买一</span>
<span class="t n" style="right:142.5px;top:168.3px;color:#ff3232;">11.60</span>
<span class="t n" style="right:26.5px;top:168.3px;color:#c8c800;">347</span>
<span class="t l" style="left:1664px;top:186.7px;">买二</span>
<span class="t n" style="right:142.5px;top:187.2px;color:#ff3232;">11.59</span>
<span class="t n" style="right:26.5px;top:187.2px;color:#c8c800;">819</span>
<span class="t l" style="left:1664px;top:205.6px;">买三</span>
<span class="t n" style="right:142.5px;top:206.1px;color:#ff3232;">11.58</span>
<span class="t n" style="right:26.5px;top:206.1px;color:#c8c800;">144</span>
<span class="t l" style="left:1664px;top:224.5px;">买四</span>
<span class="t n" style="right:142.5px;top:225px;color:#ff3232;">11.57</span>
<span class="t n" style="right:26.5px;top:225px;color:#c8c800;">221</span>
<span class="t l" style="left:1664px;top:243.4px;">买五</span>
<span class="t n" style="right:142.5px;top:243.9px;color:#ff3232;">11.56</span>
<span class="t n" style="right:26.5px;top:243.9px;color:#c8c800;">855</span>
<span class="t l" style="left:1664px;top:264px;">现价</span>
<span class="t n" style="right:142.5px;top:264.5px;color:#ff3232;">11.60</span>
<span class="t l" style="left:1781px;top:264px;">今开</span>
<span class="t n" style="right:26.5px;top:264.5px;color:#ff3232;">10.96</span>
<span class="t l" style="left:1664px;top:283.1px;">涨跌</span>
<span class="t n" style="right:142.5px;top:283.6px;color:#ff3232;">0.65</span>
<span class="t l" style="left:1781px;top:283.1px;">最高</span>
<span class="t n" style="right:26.5px;top:283.6px;color:#ff3232;">11.70</span>
<span class="t l" style="left:1664px;top:302.2px;">涨幅</span>
<span class="t n" style="right:142.5px;top:302.7px;color:#ff3232;">5.94%</span>
<span class="t l" style="left:1781px;top:302.2px;">最低</span>
<span class="t n" style="right:26.5px;top:302.7px;color:#00e600;">10.63</span>
<span class="t l" style="left:1664px;top:321.3px;">总量</span>
<span class="t n" style="right:142.5px;top:321.8px;color:#c8c800;">137304</span>
<span class="t l" style="left:1781px;top:321.3px;">量比</span>
<span class="t n" style="right:26.5px;top:321.8px;color:#d000d0;">3.18</span>
<span class="t l" style="left:1664px;top:340.4px;">外盘</span>
<span class="t n" style="right:142.5px;top:340.9px;color:#ff3232;">70752</span>
<span class="t l" style="left:1781px;top:340.4px;">内盘</span>
<span class="t n" style="right:26.5px;top:340.9px;color:#00e600;">66552</span>
<span class="t l" style="left:1664px;top:361px;">换手</span>
<span class="t n" style="right:142.5px;top:361.5px;color:#d8d8d8;">7.94%</span>
<span class="t l" style="left:1781px;top:361px;">股本</span>
<span class="t n" style="right:26.5px;top:361.5px;color:#d8d8d8;">2.05<span style="font-family:'Liberation Sans','WenQuanYi Zen Hei',sans-serif;font-weight:normal;font-size:16px;line-height:14px">亿</span></span>
<span class="t l" style="left:1664px;top:380.2px;">净资</span>
<span class="t n" style="right:142.5px;top:380.7px;color:#d8d8d8;">1.03</span>
<span class="t l" style="left:1781px;top:380.2px;">流通</span>
<span class="t n" style="right:26.5px;top:380.7px;color:#d8d8d8;">1.73<span style="font-family:'Liberation Sans','WenQuanYi Zen Hei',sans-serif;font-weight:normal;font-size:16px;line-height:14px">亿</span></span>
<span class="t l" style="left:1664px;top:399.4px;">收益<span class="pp">(</span><span class="pp" style="width:8px;transform:scaleX(0.5)">一</span><span class="pp">)</span></span>
<span class="t n" style="right:142.5px;top:399.9px;color:#d8d8d8;">-0.120</span>
<span class="t l" style="left:1781px;top:399.4px;">PE<span class="pp">(</span>动<span class="pp">)</span></span>
<span class="t n" style="right:26.5px;top:399.9px;color:#d8d8d8;">–&nbsp;&nbsp;&nbsp;</span>
<span class="t n" style="left:1663px;top:422px;color:#dcdcdc;">14:55</span>
<span class="t n" style="left:1740px;top:422px;color:#ff3232;">11.58</span>
<span class="t n" style="right:79px;top:422px;color:#c8c800;">6</span>
<span class="t n" style="left:1853px;top:422px;color:#00e600;font-weight:normal">S</span>
<span class="t n" style="right:26px;top:422px;color:#8a8a8a;">4</span>
<span class="t n" style="left:1663px;top:440px;color:#dcdcdc;">14:55</span>
<span class="t n" style="left:1740px;top:440px;color:#ff3232;">11.58</span>
<span class="t n" style="right:79px;top:440px;color:#c8c800;">20</span>
<span class="t n" style="left:1853px;top:440px;color:#00e600;font-weight:normal">S</span>
<span class="t n" style="right:26px;top:440px;color:#8a8a8a;">1</span>
<span class="t n" style="left:1663px;top:458px;color:#dcdcdc;">14:55</span>
<span class="t n" style="left:1740px;top:458px;color:#ff3232;">11.58</span>
<span class="t n" style="right:79px;top:458px;color:#c8c800;">86</span>
<span class="t n" style="left:1853px;top:458px;color:#00e600;font-weight:normal">S</span>
<span class="t n" style="right:26px;top:458px;color:#8a8a8a;">6</span>
<span class="t n" style="left:1663px;top:476px;color:#dcdcdc;">14:55</span>
<span class="t n" style="left:1740px;top:476px;color:#ff3232;">11.58</span>
<span class="t n" style="right:79px;top:476px;color:#c8c800;">37</span>
<span class="t n" style="left:1853px;top:476px;color:#ff3232;font-weight:normal">B</span>
<span class="t n" style="right:26px;top:476px;color:#8a8a8a;">2</span>
<span class="t n" style="left:1663px;top:494px;color:#dcdcdc;">14:55</span>
<span class="t n" style="left:1740px;top:494px;color:#ff3232;">11.58</span>
<span class="t n" style="right:79px;top:494px;color:#c8c800;">27</span>
<span class="t n" style="left:1853px;top:494px;color:#ff3232;font-weight:normal">B</span>
<span class="t n" style="right:26px;top:494px;color:#8a8a8a;">3</span>
<span class="t n" style="left:1663px;top:512px;color:#dcdcdc;">14:55</span>
<span class="t n" style="left:1740px;top:512px;color:#ff3232;">11.55</span>
<span class="t n" style="right:79px;top:512px;color:#c8c800;">38</span>
<span class="t n" style="left:1853px;top:512px;color:#00e600;font-weight:normal">S</span>
<span class="t n" style="right:26px;top:512px;color:#8a8a8a;">3</span>
<span class="t n" style="left:1663px;top:530px;color:#dcdcdc;">14:55</span>
<span class="t n" style="left:1740px;top:530px;color:#ff3232;">11.58</span>
<span class="t n" style="right:79px;top:530px;color:#c8c800;">39</span>
<span class="t n" style="left:1853px;top:530px;color:#ff3232;font-weight:normal">B</span>
<span class="t n" style="right:26px;top:530px;color:#8a8a8a;">6</span>
<span class="t n" style="left:1663px;top:548px;color:#dcdcdc;">14:55</span>
<span class="t n" style="left:1740px;top:548px;color:#ff3232;">11.57</span>
<span class="t n" style="right:79px;top:548px;color:#c8c800;">11</span>
<span class="t n" style="right:26px;top:548px;color:#8a8a8a;">1</span>
<span class="t n" style="left:1663px;top:566px;color:#dcdcdc;">14:55</span>
<span class="t n" style="left:1740px;top:566px;color:#ff3232;">11.57</span>
<span class="t n" style="right:79px;top:566px;color:#c8c800;">23</span>
<span class="t n" style="left:1853px;top:566px;color:#00e600;font-weight:normal">S</span>
<span class="t n" style="right:26px;top:566px;color:#8a8a8a;">3</span>
<span class="t n" style="left:1663px;top:584px;color:#dcdcdc;">14:55</span>
<span class="t n" style="left:1740px;top:584px;color:#ff3232;">11.56</span>
<span class="t n" style="right:79px;top:584px;color:#c8c800;">6</span>
<span class="t n" style="left:1853px;top:584px;color:#00e600;font-weight:normal">S</span>
<span class="t n" style="right:26px;top:584px;color:#8a8a8a;">2</span>
<span class="t n" style="left:1663px;top:602px;color:#dcdcdc;">14:55</span>
<span class="t n" style="left:1740px;top:602px;color:#ff3232;">11.57</span>
<span class="t n" style="right:79px;top:602px;color:#c8c800;">10</span>
<span class="t n" style="left:1853px;top:602px;color:#00e600;font-weight:normal">S</span>
<span class="t n" style="right:26px;top:602px;color:#8a8a8a;">1</span>
<span class="t n" style="left:1663px;top:620px;color:#dcdcdc;">14:55</span>
<span class="t n" style="left:1740px;top:620px;color:#ff3232;">11.57</span>
<span class="t n" style="right:79px;top:620px;color:#c8c800;">40</span>
<span class="t n" style="left:1853px;top:620px;color:#00e600;font-weight:normal">S</span>
<span class="t n" style="right:26px;top:620px;color:#8a8a8a;">2</span>
<span class="t n" style="left:1663px;top:638px;color:#dcdcdc;">14:56</span>
<span class="t n" style="left:1740px;top:638px;color:#ff3232;">11.57</span>
<span class="t n" style="right:79px;top:638px;color:#c8c800;">79</span>
<span class="t n" style="left:1853px;top:638px;color:#00e600;font-weight:normal">S</span>
<span class="t n" style="right:26px;top:638px;color:#8a8a8a;">2</span>
<span class="t n" style="left:1663px;top:656px;color:#dcdcdc;">14:56</span>
<span class="t n" style="left:1740px;top:656px;color:#ff3232;">11.57</span>
<span class="t n" style="right:79px;top:656px;color:#c8c800;">166</span>
<span class="t n" style="left:1853px;top:656px;color:#ff3232;font-weight:normal">B</span>
<span class="t n" style="right:26px;top:656px;color:#8a8a8a;">4</span>
<span class="t n" style="left:1663px;top:674px;color:#dcdcdc;">14:56</span>
<span class="t n" style="left:1740px;top:674px;color:#ff3232;">11.57</span>
<span class="t n" style="right:79px;top:674px;color:#c8c800;">11</span>
<span class="t n" style="left:1853px;top:674px;color:#ff3232;font-weight:normal">B</span>
<span class="t n" style="right:26px;top:674px;color:#8a8a8a;">2</span>
<span class="t n" style="left:1663px;top:692px;color:#dcdcdc;">14:56</span>
<span class="t n" style="left:1740px;top:692px;color:#ff3232;">11.57</span>
<span class="t n" style="right:79px;top:692px;color:#c8c800;">29</span>
<span class="t n" style="left:1853px;top:692px;color:#ff3232;font-weight:normal">B</span>
<span class="t n" style="right:26px;top:692px;color:#8a8a8a;">4</span>
<span class="t n" style="left:1663px;top:710px;color:#dcdcdc;">14:56</span>
<span class="t n" style="left:1740px;top:710px;color:#ff3232;">11.56</span>
<span class="t n" style="right:79px;top:710px;color:#c8c800;">7</span>
<span class="t n" style="left:1853px;top:710px;color:#00e600;font-weight:normal">S</span>
<span class="t n" style="right:26px;top:710px;color:#8a8a8a;">3</span>
<span class="t n" style="left:1663px;top:728px;color:#dcdcdc;">14:56</span>
<span class="t n" style="left:1740px;top:728px;color:#ff3232;">11.58</span>
<span class="t n" style="right:79px;top:728px;color:#c8c800;">239</span>
<span class="t n" style="left:1853px;top:728px;color:#ff3232;font-weight:normal">B</span>
<span class="t n" style="right:26px;top:728px;color:#8a8a8a;">9</span>
<span class="t n" style="left:1663px;top:746px;color:#dcdcdc;">14:56</span>
<span class="t n" style="left:1740px;top:746px;color:#ff3232;">11.58</span>
<span class="t n" style="right:79px;top:746px;color:#c8c800;">45</span>
<span class="t n" style="left:1853px;top:746px;color:#00e600;font-weight:normal">S</span>
<span class="t n" style="right:26px;top:746px;color:#8a8a8a;">3</span>
<span class="t n" style="left:1663px;top:764px;color:#dcdcdc;">14:56</span>
<span class="t n" style="left:1740px;top:764px;color:#ff3232;">11.59</span>
<span class="t n" style="right:79px;top:764px;color:#c8c800;">30</span>
<span class="t n" style="left:1853px;top:764px;color:#ff3232;font-weight:normal">B</span>
<span class="t n" style="right:26px;top:764px;color:#8a8a8a;">8</span>
<span class="t n" style="left:1663px;top:782px;color:#dcdcdc;">14:56</span>
<span class="t n" style="left:1740px;top:782px;color:#ff3232;">11.58</span>
<span class="t n" style="right:79px;top:782px;color:#c8c800;">10</span>
<span class="t n" style="left:1853px;top:782px;color:#00e600;font-weight:normal">S</span>
<span class="t n" style="right:26px;top:782px;color:#8a8a8a;">2</span>
<span class="t n" style="left:1663px;top:800px;color:#dcdcdc;">14:56</span>
<span class="t n" style="left:1740px;top:800px;color:#ff3232;">11.59</span>
<span class="t n" style="right:79px;top:800px;color:#c8c800;">117</span>
<span class="t n" style="left:1853px;top:800px;color:#ff3232;font-weight:normal">B</span>
<span class="t n" style="right:26px;top:800px;color:#8a8a8a;">3</span>
<span class="t n" style="left:1663px;top:818px;color:#dcdcdc;">14:56</span>
<span class="t n" style="left:1740px;top:818px;color:#ff3232;">11.59</span>
<span class="t n" style="right:79px;top:818px;color:#c8c800;">6</span>
<span class="t n" style="left:1853px;top:818px;color:#ff3232;font-weight:normal">B</span>
<span class="t n" style="right:26px;top:818px;color:#8a8a8a;">1</span>
<span class="t n" style="left:1663px;top:836px;color:#dcdcdc;">14:56</span>
<span class="t n" style="left:1740px;top:836px;color:#ff3232;">11.59</span>
<span class="t n" style="right:79px;top:836px;color:#c8c800;">13</span>
<span class="t n" style="left:1853px;top:836px;color:#ff3232;font-weight:normal">B</span>
<span class="t n" style="right:26px;top:836px;color:#8a8a8a;">2</span>
<span class="t n" style="left:1663px;top:854px;color:#dcdcdc;">14:56</span>
<span class="t n" style="left:1740px;top:854px;color:#ff3232;">11.59</span>
<span class="t n" style="right:79px;top:854px;color:#c8c800;">68</span>
<span class="t n" style="left:1853px;top:854px;color:#ff3232;font-weight:normal">B</span>
<span class="t n" style="right:26px;top:854px;color:#8a8a8a;">4</span>
<span class="t n" style="left:1663px;top:872px;color:#dcdcdc;">14:56</span>
<span class="t n" style="left:1740px;top:872px;color:#ff3232;">11.59</span>
<span class="t n" style="right:79px;top:872px;color:#c8c800;">1</span>
<span class="t n" style="left:1853px;top:872px;color:#ff3232;font-weight:normal">B</span>
<span class="t n" style="right:26px;top:872px;color:#8a8a8a;">1</span>
<span class="t n" style="left:1663px;top:890px;color:#dcdcdc;">14:56</span>
<span class="t n" style="left:1740px;top:890px;color:#ff3232;">11.60</span>
<span class="t n" style="right:79px;top:890px;color:#c8c800;">182</span>
<span class="t n" style="left:1853px;top:890px;color:#ff3232;font-weight:normal">B</span>
<span class="t n" style="right:26px;top:890px;color:#8a8a8a;">5</span>
<span class="t n" style="left:1663px;top:908px;color:#dcdcdc;">14:56</span>
<span class="t n" style="left:1740px;top:908px;color:#ff3232;">11.59</span>
<span class="t n" style="right:79px;top:908px;color:#c8c800;">35</span>
<span class="t n" style="left:1853px;top:908px;color:#00e600;font-weight:normal">S</span>
<span class="t n" style="right:26px;top:908px;color:#8a8a8a;">3</span>
<span class="t n" style="left:1663px;top:926px;color:#dcdcdc;">14:56</span>
<span class="t n" style="left:1740px;top:926px;color:#ff3232;">11.59</span>
<span class="t n" style="right:79px;top:926px;color:#c8c800;">12</span>
<span class="t n" style="left:1853px;top:926px;color:#ff3232;font-weight:normal">B</span>
<span class="t n" style="right:26px;top:926px;color:#8a8a8a;">1</span>
<span class="t n" style="left:1663px;top:944px;color:#dcdcdc;">14:56</span>
<span class="t n" style="left:1740px;top:944px;color:#ff3232;">11.59</span>
<span class="t n" style="right:79px;top:944px;color:#c8c800;">26</span>
<span class="t n" style="left:1853px;top:944px;color:#00e600;font-weight:normal">S</span>
<span class="t n" style="right:26px;top:944px;color:#8a8a8a;">4</span>
<span class="t n" style="left:1663px;top:962px;color:#dcdcdc;">14:57</span>
<span class="t n" style="left:1740px;top:962px;color:#ff3232;">11.60</span>
<span class="t n" style="right:79px;top:962px;color:#c8c800;">905</span>
<span class="t n" style="left:1853px;top:962px;color:#ff3232;font-weight:normal">B</span>
<span class="t n" style="right:26px;top:962px;color:#8a8a8a;">16</span>
<div class="b" style="left:1895px;top:20px;width:25px;height:947px;background:#eef2f8;border-left:1px solid #9a9a9a"></div>
<svg width="25" height="946" style="left:1895px;top:21px" viewBox="1895 21 25 946" font-family="Liberation Sans, WenQuanYi Zen Hei, sans-serif"><path d="M1900.5 30l6-5.5v3h6.5v5h-6.5v3z" fill="#fff" stroke="#1848c8" stroke-width="1.1"/><path d="M1907.5 46l5.5 6h-3v6.5h-5v-6.5h-3z" fill="#fff" stroke="#1848c8" stroke-width="1.1"/><path d="M1907.5 83l5.5-6h-3v-6.5h-5v6.5h-3z" fill="#fff" stroke="#1848c8" stroke-width="1.1"/><rect x="1900.5" y="92" width="14" height="13" fill="#ffffff" stroke="#1848c8" stroke-width="1"/><path d="M1902 95h5M1902 98h5M1902 101h4" stroke="#20a040" stroke-width="1.2"/><path d="M1908 95h5M1908 98h5" stroke="#e03030" stroke-width="1.2"/><circle cx="1911" cy="102" r="3" fill="#d0d0d0" stroke="#707070" stroke-width="0.8"/><rect x="1900.5" y="115" width="14" height="13" fill="#ffffff" stroke="#1848c8" stroke-width="1"/><path d="M1902.5 117v9M1905.5 117v9" stroke="#e02020" stroke-width="1.6" stroke-dasharray="2 1"/><path d="M1908.5 117v9" stroke="#20a040" stroke-width="1.6" stroke-dasharray="2 1"/><path d="M1911.5 117v9" stroke="#2040e0" stroke-width="1.6" stroke-dasharray="2 1"/><rect x="1900.5" y="138" width="14" height="13" fill="#ffffff" stroke="#1848c8" stroke-width="1"/><path d="M1902 148l3-3 2.5 1.5 4.5-5" fill="none" stroke="#e02020" stroke-width="1.4"/><rect x="1900.5" y="161" width="14" height="13" fill="#ffffff" stroke="#1848c8" stroke-width="1"/><path d="M1903.5 163v9M1911.5 162v8" stroke="#e02020" stroke-width="1"/><rect x="1902" y="165" width="3" height="5" fill="#e02020"/><rect x="1910" y="163" width="3" height="4" fill="#e02020"/><path d="M1907.5 164v9" stroke="#20a040"/><rect x="1906" y="166" width="3" height="5" fill="#20a040"/><rect x="1903.5" y="183.5" width="11" height="9" fill="#fff" stroke="#1848c8"/><rect x="1900.5" y="187.5" width="11" height="9" fill="#fff" stroke="#1848c8"/><path d="M1902 190.5h8M1902 193.5h8" stroke="#444" stroke-width="1.2" stroke-dasharray="3 1"/><rect x="1900.5" y="208" width="14" height="13" fill="#ffffff" stroke="#1848c8" stroke-width="1"/><text x="1901.5" y="218.5" font-size="9" font-weight="bold" fill="#1848c8" textLength="12" lengthAdjust="spacingAndGlyphs">F10</text><rect x="1900.5" y="230" width="14" height="13" fill="#ffffff" stroke="#1848c8" stroke-width="1"/><rect x="1902.500" y="232.5" width="4" height="3" fill="#f0b020" stroke="#a06000" stroke-width="0.6"/><rect x="1908" y="238" width="4" height="3" fill="#f0b020" stroke="#a06000" stroke-width="0.6"/><path d="M1904.5 236v3.5h3.500" fill="none" stroke="#555" stroke-width="0.8"/><rect x="1900.5" y="254" width="14" height="13" fill="#ffffff" stroke="#1848c8" stroke-width="1"/><text x="1902" y="265" font-size="11" fill="#f07010">自</text><rect x="1900.5" y="277" width="14" height="13" fill="#ffffff" stroke="#1848c8" stroke-width="1"/><text x="1901.5" y="287.5" font-size="9" font-weight="bold" fill="#1848c8" textLength="12" lengthAdjust="spacingAndGlyphs">F12</text><rect x="1900.5" y="300" width="14" height="13" rx="5" fill="#fff" stroke="#107040"/><text x="1901.500" y="310.5" font-size="10" font-style="italic" font-weight="bold" fill="#1848c8" textLength="12" lengthAdjust="spacingAndGlyphs">f(x)</text><rect x="1900.5" y="323" width="14" height="13" fill="#ffffff" stroke="#1848c8" stroke-width="1"/><circle cx="1907.5" cy="329.5" r="3.2" fill="none" stroke="#1848c8" stroke-width="1.2"/><path d="M1899 345.5h18" stroke="#a0a0a0"/><rect x="1900.5" y="354" width="14" height="13" fill="#ffffff" stroke="#1848c8" stroke-width="1"/><path d="M1902 358.500q1.500-2.500 3 0t3 0 3 0 2 0" fill="none" stroke="#e02020" stroke-width="1.2"/><path d="M1902 363q1.500-2.500 3 0t3 0 3 0 2 0" fill="none" stroke="#2040e0" stroke-width="1.2"/><text x="1899.500" y="387" font-size="10.500" font-weight="bold" fill="#2848c0" textLength="16" lengthAdjust="spacingAndGlyphs">RSI</text><text x="1903" y="412" font-size="16" font-weight="bold" fill="#d02020">S</text><path d="M1907.5 397l3.500 3.500h-7z" fill="#d02020"/><path d="M1907.5 422l3 3.500h-2v2.500h2.500v-2l3.500 3-3.500 3v-2h-2.500v2.500h2l-3 3.500-3-3.500h2v-2.500h-2.500v2l-3.500-3 3.500-3v2h2.500v-2.500h-2z" fill="#1848c8"/><path d="M1901 459l1.500-4 8-8 2.500 2.500-8 8z" fill="#f0a030" stroke="#a06010" stroke-width="0.7"/><path d="M1901 459l1.500-4 2.500 2.500z" fill="#604020"/><path d="M1899 467.500h18" stroke="#a0a0a0"/><rect x="1900.5" y="478" width="14" height="13" fill="#ffffff" stroke="#1848c8" stroke-width="1"/><text x="1902.500" y="488.500" font-size="9" font-weight="bold" fill="#1848c8">F5</text><rect x="1900.5" y="500" width="14" height="13" fill="#ffffff" stroke="#1848c8" stroke-width="1"/><path d="M1903.500 507a4 4 0 0 1 7-3l1-1.500v4.500h-4l1.500-1.500a2.500 2.500 0 0 0-4 1.500zM1911.500 507a4 4 0 0 1-7 3l-1 1.500v-4.500h4l-1.500 1.500a2.500 2.500 0 0 0 4-1.500z" fill="#30b040"/><text x="1907.500" y="533" font-size="11" fill="#10309a" text-anchor="middle">1</text><text x="1907.500" y="556" font-size="11" fill="#10309a" text-anchor="middle">5</text><text x="1907.500" y="579" font-size="11" fill="#10309a" text-anchor="middle">15</text><text x="1907.500" y="601.5" font-size="11" fill="#10309a" text-anchor="middle">30</text><text x="1907.500" y="624.5" font-size="11" fill="#10309a" text-anchor="middle">60</text><text x="1907.500" y="717" font-size="11" fill="#10309a" text-anchor="middle">N</text><rect x="1896" y="633.500" width="24" height="22" fill="#fafcff" stroke="#b0b8c8" stroke-width="1"/><text x="1907.500" y="649" font-size="12" fill="#10309a" text-anchor="middle">日</text><text x="1907.500" y="672" font-size="12" fill="#10309a" text-anchor="middle">周</text><text x="1907.500" y="695" font-size="12" fill="#10309a" text-anchor="middle">月</text><text x="1907.500" y="740.5" font-size="12" fill="#10309a" text-anchor="middle">多</text><text x="1907.500" y="763.5" font-size="12" fill="#10309a" text-anchor="middle">季</text><text x="1907.500" y="786.5" font-size="12" fill="#10309a" text-anchor="middle">年</text></svg>
<div class="b" style="left:1739px;top:921px;width:122px;height:60px;border-radius:30px;background:rgba(38,44,58,0.86)"></div>
<svg width="70" height="60" style="left:1798px;top:912px" viewBox="0 0 70 60" shape-rendering="geometricPrecision"><defs><clipPath id="cc"><circle cx="32" cy="32" r="27"/></clipPath></defs><circle cx="32" cy="32" r="28" fill="#23435a"/><g clip-path="url(#cc)"><path d="M0 36q8-6 16 0t16-2 16 2 16-2v30h-64z" fill="#1a6a96"/></g><path d="M32 4a28 28 0 0 1 0 56" fill="none" stroke="#28c8e8" stroke-width="1.600"/></svg>
<span class="t " style="left:1815px;top:934px;color:#ffffff;font-size:23px;font-weight:normal;letter-spacing:3px;font-family:'Liberation Sans',sans-serif;transform:scaleX(0.85);transform-origin:left">41</span>
<span class="t " style="left:1841px;top:943px;color:#ffffff;font-size:11px">%</span>
<span class="t " style="left:1774px;top:934.5px;color:#f0f0f0;font-size:10px;letter-spacing:1px">0K/s</span>
<span class="t " style="left:1774px;top:950.5px;color:#f0f0f0;font-size:10px;letter-spacing:1px">0K/s</span>
<svg width="10" height="30" style="left:1746px;top:932px" viewBox="0 0 10 30"><path d="M5 2v8" stroke="#20b0f0" stroke-width="1.200"/><path d="M5 18v7M1.500 22.500l3.500 4 3.500-4z" stroke="#f09010" fill="#f09010" stroke-width="1.200"/></svg>
<span class="t " style="left:1704px;top:900px;color:#ffffff;font-size:36px;font-weight:900;font-family:'Liberation Sans','Noto Sans CJK SC',sans-serif;letter-spacing:0px">财富池</span>
<span class="t " style="left:1820px;top:907px;color:#ffffff;font-size:14.500px;font-weight:bold;font-family:'Liberation Sans',sans-serif">cfchi.com</span>
<span class="t " style="left:1821px;top:926px;color:#ffffff;font-size:10.800px;font-weight:bold;font-family:'Liberation Sans','Noto Sans CJK SC',sans-serif">指标交易平台</span>
<svg width="16" height="16" style="left:1779px;top:900px" viewBox="0 0 16 16"><path d="M4 14l4-12 4 12z" fill="#f0c060"/><circle cx="8" cy="4" r="2.500" fill="#f8e0a0"/></svg>
</body></html>
